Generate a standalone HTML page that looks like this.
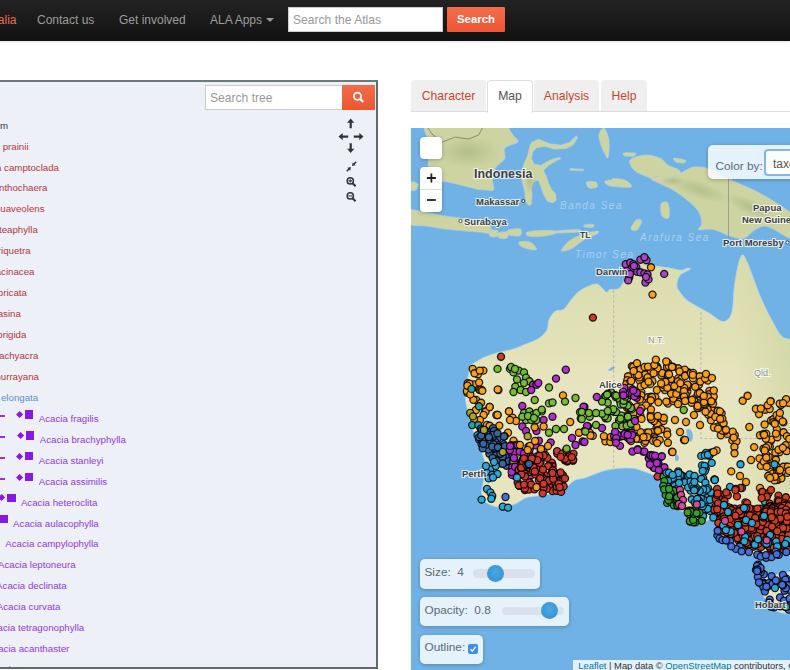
<!DOCTYPE html>
<html><head><meta charset="utf-8"><style>
*{box-sizing:border-box;margin:0;padding:0}
html,body{width:790px;height:670px;overflow:hidden;background:#fff;font-family:"Liberation Sans",sans-serif}
.abs{position:absolute}
#nav{left:0;top:0;width:790px;height:41px;background:linear-gradient(#232323,#111);box-shadow:0 1px 2px rgba(0,0,0,.12)}
.nl{position:absolute;top:13px;font-size:12px;color:#9d9d9d;white-space:nowrap;line-height:14px}
#sinp{left:288px;top:7px;width:155px;height:25px;background:#fff;border:1px solid #ccc}
#sinp span{position:absolute;left:4px;top:5px;font-size:12.1px;color:#999;line-height:14px}
#sbtn{left:447px;top:7px;width:58px;height:25px;background:linear-gradient(#f36c4c,#ee5631);border-radius:1px;color:#fff;font-weight:bold;font-size:11.4px;text-align:center;line-height:25px}
#tree{left:-10px;top:80px;width:388px;height:589px;background:#edf0f7;border:2px solid #5f6b6b;border-top-color:#6d7878}
.tr{position:absolute;font-size:9.7px;line-height:12px;white-space:nowrap}
.red{color:#b3363c}
.pur{color:#9038e6}
.blu{color:#5b8ee0}
#tsin{left:205px;top:85px;width:138px;height:25px;background:#fff;border:1px solid #ccc}
#tsin span{position:absolute;left:4px;top:5px;font-size:12.1px;color:#999;line-height:14px}
#tsbtn{left:342px;top:85px;width:33px;height:25px;background:linear-gradient(#f36c4c,#ee5631)}
.tab{position:absolute;top:80px;height:31px;background:#efefef;border-radius:4px 4px 0 0;font-size:12.2px;color:#c9462c;line-height:14px;padding-top:9px;text-align:center}
#tabline{left:411px;top:111px;width:379px;height:1px;background:#ddd}
#map{left:411px;top:128px;width:379px;height:542px;overflow:hidden;background:#72b0e3}
.lc{position:absolute;background:rgba(255,255,255,.82);border-radius:5px;box-shadow:0 1px 4px rgba(0,0,0,.25);font-size:12.5px;color:#555;line-height:14px}
</style></head><body>
<div id="nav" class="abs">
<div class="nl" style="right:773.5px;color:#ea6c4b">Australia</div>
<div class="nl" style="left:37px">Contact us</div>
<div class="nl" style="left:119px">Get involved</div>
<div class="nl" style="left:210px">ALA Apps</div>
<div class="abs" style="left:266px;top:18px;width:0;height:0;border-left:4px solid transparent;border-right:4px solid transparent;border-top:4px solid #9d9d9d"></div>
<div id="sinp" class="abs"><span>Search the Atlas</span></div>
<div id="sbtn" class="abs">Search</div>
</div>
<div id="tree" class="abs" style="background:#edf0f7;border:none;z-index:0"></div>
<div id="tsin" class="abs"><span>Search tree</span></div>
<div id="tsbtn" class="abs"><svg width="33" height="25" viewBox="0 0 33 25"><circle cx="15.5" cy="11.3" r="3.6" stroke="#fff" stroke-width="1.8" fill="none"/><path d="M18.2 14 l3 3" stroke="#fff" stroke-width="2.2"/></svg></div>
<div class="abs" style="left:0;top:0;width:376px;height:667px;overflow:hidden"><div class="tr " style="left:0px;top:119.6px;color:#333">m</div>
<div class="tr red" style="left:0px;top:140.5px">&nbsp;prainii</div>
<div class="tr red" style="left:-4px;top:161.5px">a&nbsp;camptoclada</div>
<div class="tr red" style="left:-1px;top:182.4px">nthochaera</div>
<div class="tr red" style="left:-4.5px;top:203.4px">suaveolens</div>
<div class="tr red" style="left:-1px;top:224.3px">teaphylla</div>
<div class="tr red" style="left:-2.2px;top:245.2px">riquetra</div>
<div class="tr red" style="left:-4.3px;top:266.2px">acinacea</div>
<div class="tr red" style="left:-2.2px;top:287.1px">bricata</div>
<div class="tr red" style="left:-2.3px;top:308.1px">asina</div>
<div class="tr red" style="left:-2.7px;top:329.0px">brigida</div>
<div class="tr red" style="left:-1px;top:349.9px">achyacra</div>
<div class="tr red" style="left:-7.3px;top:370.9px">murrayana</div>
<div class="tr blu" style="left:-7.1px;top:391.8px">a&nbsp;elongata</div>
<div class="tr pur" style="left:38.8px;top:412.8px">Acacia fragilis</div>
<div class="abs" style="left:0;top:415.2px;width:5px;height:1.5px;background:#9b2fe0"></div>
<div class="abs" style="left:16.7px;top:411.7px;width:5.2px;height:5.2px;background:#8818e8;transform:rotate(45deg)"></div>
<div class="abs" style="left:24.8px;top:410.1px;width:8.6px;height:8.6px;background:#8818e8"></div>
<div class="tr pur" style="left:39.7px;top:433.7px">Acacia brachyphylla</div>
<div class="abs" style="left:0;top:436.1px;width:5px;height:1.5px;background:#9b2fe0"></div>
<div class="abs" style="left:17.5px;top:432.6px;width:5.2px;height:5.2px;background:#8818e8;transform:rotate(45deg)"></div>
<div class="abs" style="left:25.8px;top:431.0px;width:8.6px;height:8.6px;background:#8818e8"></div>
<div class="tr pur" style="left:38.8px;top:454.6px">Acacia stanleyi</div>
<div class="abs" style="left:0;top:457.0px;width:5px;height:1.5px;background:#9b2fe0"></div>
<div class="abs" style="left:16.7px;top:453.5px;width:5.2px;height:5.2px;background:#8818e8;transform:rotate(45deg)"></div>
<div class="abs" style="left:24.8px;top:451.9px;width:8.6px;height:8.6px;background:#8818e8"></div>
<div class="tr pur" style="left:38.8px;top:475.6px">Acacia assimilis</div>
<div class="abs" style="left:0;top:478.0px;width:5px;height:1.5px;background:#9b2fe0"></div>
<div class="abs" style="left:16.7px;top:474.5px;width:5.2px;height:5.2px;background:#8818e8;transform:rotate(45deg)"></div>
<div class="abs" style="left:24.8px;top:472.9px;width:8.6px;height:8.6px;background:#8818e8"></div>
<div class="tr pur" style="left:20.9px;top:496.5px">Acacia heteroclita</div>
<div class="abs" style="left:-0.8px;top:495.4px;width:5.2px;height:5.2px;background:#8818e8;transform:rotate(45deg)"></div>
<div class="abs" style="left:7.4px;top:493.8px;width:8.6px;height:8.6px;background:#8818e8"></div>
<div class="tr pur" style="left:13.1px;top:517.5px">Acacia aulacophylla</div>
<div class="abs" style="left:-8.8px;top:516.4px;width:5.2px;height:5.2px;background:#8818e8;transform:rotate(45deg)"></div>
<div class="abs" style="left:-1.0px;top:514.8px;width:8.6px;height:8.6px;background:#8818e8"></div>
<div class="tr pur" style="left:5.3px;top:538.4px">Acacia campylophylla</div>
<div class="tr pur" style="left:-2px;top:559.3px">Acacia leptoneura</div>
<div class="tr pur" style="left:-3.9px;top:580.3px">Acacia declinata</div>
<div class="tr pur" style="left:-3.2px;top:601.2px">Acacia curvata</div>
<div class="tr pur" style="left:-13.8px;top:622.2px">Acacia tetragonophylla</div>
<div class="tr pur" style="left:-13.1px;top:643.1px">Acacia acanthaster</div>
<div class="tr pur" style="left:-13.1px;top:664.0px">Acacia aneura</div></div>
<svg class="abs" style="left:330px;top:112px" width="40" height="100" viewBox="330 112 40 100">
<g fill="#333" stroke="none">
<path d="M350.7 118.5 l-3.6 4.2 h2.5 v5.5 h2.2 v-5.5 h2.5z"/>
<path d="M350.7 153 l-3.6 -4.2 h2.5 v-5.5 h2.2 v5.5 h2.5z"/>
<path d="M338.5 136.6 l4.2 -3.6 v2.5 h5.5 v2.2 h-5.5 v2.5z"/>
<path d="M363.5 136.6 l-4.2 -3.6 v2.5 h-5.5 v2.2 h5.5 v2.5z"/>
</g>
<path d="M346.8 171.2 L349.2 168.8 M356.2 161.8 L353.7 164.3" stroke="#333" stroke-width="1.6" fill="none"/>
<path d="M350.9 167.1 L350.19 170.63 L347.37 167.81Z M352.0 166.0 L355.53 165.29 L352.71 162.47Z" fill="#333"/>
<g stroke="#333" fill="none">
<circle cx="350.3" cy="180.9" r="3.1" stroke-width="1.5"/>
<path d="M352.6 183.2 l3 3" stroke-width="2"/>
<path d="M348.6 180.9 h3.4 M350.3 179.2 v3.4" stroke-width="1.1"/>
<circle cx="350.3" cy="195.9" r="3.1" stroke-width="1.5"/>
<path d="M352.6 198.2 l3 3" stroke-width="2"/>
<path d="M348.6 195.9 h3.4" stroke-width="1.1"/>
</g>
</svg>
<div class="abs" style="left:-10px;top:80px;width:388px;height:589px;border:2px solid #5f6b6b;border-top-color:#6d7878"></div>
<div class="tab" style="left:411px;width:75px">Character</div>
<div class="tab" style="left:487px;width:46px;background:#fff;border:1px solid #ddd;border-bottom-color:#fff;color:#555;padding-top:8px;height:33px;z-index:2">Map</div>
<div class="tab" style="left:534px;width:65px">Analysis</div>
<div class="tab" style="left:601px;width:46px">Help</div>
<div id="tabline" class="abs"></div>
<div id="map" class="abs"><svg width="379" height="542" viewBox="411 128 379 542" style="display:block">
<rect x="411" y="128" width="379" height="542" fill="#71b2e6"/>
<g fill="#cdd4a2" stroke="#a9cde8" stroke-width="0.6">
<path d="M426.0,120.0 C440.3,118.7 496.2,118.7 510.0,120.0 C523.8,121.3 508.3,125.3 509.0,128.0 C509.7,130.7 512.5,133.7 514.0,136.0 C515.5,138.3 519.5,140.0 518.0,142.0 C516.5,144.0 507.2,145.3 505.0,148.0 C502.8,150.7 506.2,155.3 504.8,158.4 C503.4,161.5 498.6,164.0 496.7,166.5 C494.8,169.0 494.4,171.2 493.7,173.6 C493.0,176.0 492.6,178.0 492.6,180.7 C492.6,183.4 494.7,188.4 493.6,190.0 C492.5,191.6 488.6,190.1 486.0,190.0 C483.4,189.9 480.6,189.9 478.0,189.5 C475.4,189.1 473.3,188.2 470.4,187.5 C467.4,186.8 463.7,185.8 460.3,185.0 C456.9,184.2 453.4,183.2 450.0,182.5 C446.6,181.8 443.0,181.8 440.0,181.0 C437.0,180.2 434.0,180.7 432.0,178.0 C430.0,175.3 428.3,169.7 428.0,165.0 C427.7,160.3 430.0,154.2 430.0,150.0 C430.0,145.8 429.0,143.7 428.0,140.0 C427.0,136.3 424.3,131.3 424.0,128.0 C423.7,124.7 411.7,121.3 426.0,120.0Z"/>
<path d="M405.0,210.0 C408.3,208.0 418.3,211.0 425.0,212.0 C431.7,213.0 438.5,214.9 445.0,216.0 C451.5,217.1 458.5,217.5 464.0,218.5 C469.5,219.5 473.7,220.8 478.0,222.0 C482.3,223.2 488.0,224.2 490.0,226.0 C492.0,227.8 492.0,232.0 490.0,233.0 C488.0,234.0 482.3,232.3 478.0,232.0 C473.7,231.7 469.5,231.5 464.0,231.0 C458.5,230.5 451.5,229.8 445.0,229.0 C438.5,228.2 431.7,226.8 425.0,226.0 C418.3,225.2 408.3,226.7 405.0,224.0 C401.7,221.3 401.7,212.0 405.0,210.0Z"/>
<path d="M490.0,231.0 C491.3,230.1 496.4,229.5 497.6,230.4 C498.8,231.3 498.3,235.6 497.0,236.5 C495.7,237.4 491.2,236.9 490.0,236.0 C488.8,235.1 488.7,231.9 490.0,231.0Z"/>
<path d="M498.4,233.0 C499.8,232.0 506.1,231.2 507.5,232.0 C508.9,232.8 508.4,237.0 507.0,238.0 C505.6,239.0 500.4,238.8 499.0,238.0 C497.6,237.2 497.0,234.0 498.4,233.0Z"/>
<path d="M508.2,230.0 C510.1,229.0 518.4,228.1 520.4,229.0 C522.4,229.9 521.9,234.7 520.0,235.7 C518.1,236.7 511.0,235.9 509.0,235.0 C507.0,234.1 506.3,231.0 508.2,230.0Z"/>
<path d="M527.2,232.0 C529.2,231.1 535.3,230.6 540.0,230.4 C544.7,230.2 552.8,230.2 555.3,230.8 C557.8,231.4 557.5,233.1 555.0,234.0 C552.5,234.9 544.5,236.2 540.0,236.5 C535.5,236.8 530.1,236.8 528.0,236.0 C525.9,235.2 525.2,232.9 527.2,232.0Z"/>
<path d="M556.0,231.0 C559.7,230.4 574.3,229.4 578.0,229.6 C581.7,229.8 581.7,231.4 578.0,232.0 C574.3,232.6 559.7,233.2 556.0,233.0 C552.3,232.8 552.3,231.6 556.0,231.0Z"/>
<path d="M561.4,250.1 C562.2,248.4 565.7,243.5 569.0,241.0 C572.3,238.5 576.6,236.6 581.1,234.9 C585.6,233.2 593.5,231.3 596.3,231.1 C599.1,230.8 599.4,232.2 597.9,233.4 C596.4,234.6 590.5,236.2 587.2,238.0 C583.9,239.8 580.6,242.3 578.1,244.1 C575.6,245.9 574.3,247.5 572.0,248.6 C569.7,249.7 566.2,250.7 564.4,250.9 C562.6,251.2 560.6,251.8 561.4,250.1Z"/>
<path d="M519.0,242.0 C520.3,241.2 527.1,241.0 530.0,242.0 C532.9,243.0 535.6,246.7 536.3,248.0 C537.0,249.3 536.4,250.2 534.0,250.0 C531.6,249.8 524.5,248.3 522.0,247.0 C519.5,245.7 517.7,242.8 519.0,242.0Z"/>
<path d="M584.2,225.0 C585.6,224.6 591.8,223.9 593.3,224.3 C594.8,224.7 594.4,226.9 593.0,227.3 C591.6,227.8 586.5,227.4 585.0,227.0 C583.5,226.6 582.8,225.4 584.2,225.0Z"/>
<path d="M605.0,181.0 C606.7,180.0 615.7,179.3 620.0,180.0 C624.3,180.7 629.8,183.8 631.0,185.0 C632.2,186.2 630.5,186.8 627.0,187.0 C623.5,187.2 613.7,187.0 610.0,186.0 C606.3,185.0 603.3,182.0 605.0,181.0Z"/>
<path d="M587.0,182.0 C588.2,181.0 594.3,181.2 596.0,182.0 C597.7,182.8 598.2,186.0 597.0,187.0 C595.8,188.0 590.7,188.8 589.0,188.0 C587.3,187.2 585.8,183.0 587.0,182.0Z"/>
<path d="M599.0,134.0 C599.7,131.7 602.3,127.0 604.0,128.0 C605.7,129.0 608.3,135.0 609.0,140.0 C609.7,145.0 609.0,156.3 608.0,158.0 C607.0,159.7 604.3,152.7 603.0,150.0 C601.7,147.3 600.7,144.7 600.0,142.0 C599.3,139.3 598.3,136.3 599.0,134.0Z"/>
<path d="M630.0,160.0 C631.8,157.5 640.0,155.3 645.0,155.0 C650.0,154.7 656.2,156.3 660.0,158.0 C663.8,159.7 664.7,162.8 668.0,165.0 C671.3,167.2 678.3,168.5 680.0,171.0 C681.7,173.5 681.0,178.3 678.0,180.0 C675.0,181.7 667.5,181.7 662.0,181.0 C656.5,180.3 649.7,177.8 645.0,176.0 C640.3,174.2 636.5,172.7 634.0,170.0 C631.5,167.3 628.2,162.5 630.0,160.0Z"/>
<path d="M411.0,182.0 C412.2,181.0 417.2,182.7 418.0,184.0 C418.8,185.3 417.2,189.0 416.0,190.0 C414.8,191.0 411.8,191.3 411.0,190.0 C410.2,188.7 409.8,183.0 411.0,182.0Z"/>
<path d="M661.0,204.0 C662.0,201.8 666.7,200.8 668.0,203.0 C669.3,205.2 670.0,215.3 669.0,217.5 C668.0,219.7 663.3,218.2 662.0,216.0 C660.7,213.8 660.0,206.2 661.0,204.0Z"/>
<path d="M631.0,229.0 C630.8,227.3 634.2,221.3 636.0,220.0 C637.8,218.7 641.6,219.3 641.8,221.0 C642.0,222.7 638.8,228.7 637.0,230.0 C635.2,231.3 631.2,230.7 631.0,229.0Z"/>
<path d="M674.0,158.0 C675.5,157.7 683.3,159.2 685.0,160.0 C686.7,160.8 685.5,162.7 684.0,163.0 C682.5,163.3 677.7,162.8 676.0,162.0 C674.3,161.2 672.5,158.3 674.0,158.0Z"/>
<path d="M623.7,153.0 C625.4,152.5 633.3,152.5 635.0,153.0 C636.7,153.5 635.7,155.5 634.0,156.0 C632.3,156.5 626.7,156.5 625.0,156.0 C623.3,155.5 622.0,153.5 623.7,153.0Z"/>
<path d="M612.0,179.0 C613.2,178.0 621.7,178.7 625.0,180.0 C628.3,181.3 632.8,186.0 631.6,187.0 C630.4,188.0 621.3,187.3 618.0,186.0 C614.7,184.7 610.8,180.0 612.0,179.0Z"/>
<polygon points="530.1,145.1 527.4,155.9 523.4,165.3 520.7,176.0 522.8,184.1 524.8,192.1 525.4,201.5 528.8,205.5 531.5,204.2 532.1,194.8 531.5,188.1 534.2,181.4 538.2,180.0 540.9,186.7 543.6,194.8 547.6,201.5 553.0,202.9 556.3,200.2 555.6,193.5 551.6,189.4 548.9,184.1 546.2,176.0 543.6,170.6 548.9,165.3 555.6,161.2 561.0,158.6 559.7,157.2 554.3,158.6 547.6,161.2 540.9,165.3 534.2,163.9 531.5,158.6 532.8,151.8 536.8,147.8 544.9,146.5 554.3,149.2 566.4,148.5 573.1,145.1 577.8,137.8 576.4,135.7 569.1,142.4 561.0,145.1 550.3,143.8 538.2,139.1 531.5,142.4" stroke-linejoin="round"/>
<path d="M570,168.5 l14,0.8 l-1,1.5 l-13,-0.5z M586.5,182 l3,0 l1,4 l-3,0.5z"/>
<path d="M650.8,178.8 C649.2,176.6 658.0,176.5 662.0,176.0 C666.0,175.5 670.0,177.2 674.7,175.9 C679.4,174.6 686.0,169.5 690.0,168.0 C694.0,166.5 695.7,166.8 698.6,166.9 C701.5,167.0 702.6,166.4 707.6,168.4 C712.6,170.4 720.5,175.1 728.5,178.8 C736.5,182.5 747.4,186.8 755.4,190.8 C763.4,194.8 770.5,199.2 776.3,202.7 C782.1,206.2 786.0,209.8 790.0,211.7 C794.0,213.6 798.3,209.3 800.0,214.0 C801.7,218.7 801.7,235.9 800.0,240.0 C798.3,244.1 795.5,240.8 790.0,238.6 C784.5,236.4 773.1,228.1 767.3,226.6 C761.5,225.1 759.4,227.6 755.4,229.6 C751.4,231.6 747.9,237.6 743.4,238.6 C738.9,239.6 733.5,237.1 728.5,235.6 C723.5,234.1 718.5,230.6 713.5,229.6 C708.5,228.6 700.6,230.6 698.6,229.6 C696.6,228.6 701.6,226.7 701.6,223.7 C701.6,220.7 701.1,215.7 698.6,211.7 C696.1,207.7 691.1,203.5 686.6,199.8 C682.1,196.1 677.7,192.8 671.7,189.3 C665.7,185.8 652.4,181.0 650.8,178.8Z" fill="#cdd4a2"/>
</g>
<defs><linearGradient id="gN" x1="0" y1="0" x2="0" y2="1" gradientUnits="objectBoundingBox"><stop offset="0" stop-color="#c9d39c" stop-opacity="0.5"/><stop offset="0.32" stop-color="#d3d9a6" stop-opacity="0.25"/><stop offset="0.45" stop-color="#e7e5bf" stop-opacity="0"/></linearGradient><linearGradient id="gE" x1="0" y1="0" x2="1" y2="0"><stop offset="0.8" stop-color="#c9d39c" stop-opacity="0"/><stop offset="1" stop-color="#c5cf98" stop-opacity="0.6"/></linearGradient><radialGradient id="gM" cx="0.5" cy="0.5" r="0.5"><stop offset="0" stop-color="#9fae78" stop-opacity="0.55"/><stop offset="1" stop-color="#9fae78" stop-opacity="0"/></radialGradient></defs>
<path d="M595.0,284.0 C591.6,284.6 584.2,287.9 580.4,290.4 C576.6,292.9 574.8,295.6 572.0,298.8 C569.2,302.0 566.5,307.2 563.7,309.3 C560.9,311.4 557.8,309.6 555.3,311.3 C552.8,313.0 550.4,316.6 549.0,319.7 C547.6,322.8 548.7,326.9 547.0,330.0 C545.3,333.1 542.4,336.0 538.6,338.5 C534.8,341.0 528.2,343.1 524.0,344.8 C519.8,346.6 518.0,347.6 513.5,349.0 C509.0,350.4 501.7,351.6 496.8,353.0 C491.9,354.4 487.8,355.8 484.3,357.3 C480.8,358.8 478.2,360.6 476.0,362.0 C473.8,363.4 472.1,363.5 470.9,365.4 C469.7,367.3 469.6,370.5 468.9,373.4 C468.2,376.3 467.4,379.9 466.8,382.8 C466.2,385.7 465.7,388.2 465.5,390.9 C465.3,393.6 465.3,396.3 465.5,399.0 C465.7,401.7 466.2,404.1 466.8,407.0 C467.4,409.9 468.2,413.5 468.9,416.4 C469.6,419.3 469.9,421.3 470.9,424.4 C471.9,427.5 473.6,431.6 474.9,435.2 C476.2,438.8 477.3,442.0 478.9,446.0 C480.4,450.0 483.3,455.1 484.2,459.0 C485.1,462.9 484.3,465.7 484.2,469.5 C484.1,473.3 483.8,478.2 483.4,482.0 C483.0,485.8 481.3,489.3 481.6,492.5 C481.9,495.7 482.6,499.0 485.0,501.4 C487.4,503.8 492.2,505.8 495.8,506.7 C499.4,507.6 502.9,507.3 506.4,506.7 C509.9,506.1 513.7,504.5 517.0,503.0 C520.3,501.5 522.8,499.0 526.0,497.8 C529.2,496.6 532.7,496.6 536.5,496.0 C540.3,495.4 544.9,494.9 549.0,494.3 C553.1,493.7 558.1,494.0 561.3,492.5 C564.5,491.0 566.0,487.5 568.4,485.4 C570.8,483.3 572.6,481.3 575.5,480.0 C578.4,478.7 580.8,479.2 586.0,477.5 C591.2,475.8 599.7,471.6 607.0,470.0 C614.3,468.4 623.8,467.8 630.0,468.0 C636.2,468.2 639.9,470.1 644.3,471.5 C648.7,472.9 653.5,475.1 656.3,476.3 C659.1,477.5 659.7,477.1 661.3,478.8 C662.9,480.5 664.3,483.3 665.8,486.3 C667.3,489.3 668.8,493.5 670.3,496.7 C671.8,499.9 672.8,503.2 674.8,505.7 C676.8,508.2 679.7,509.6 682.2,511.6 C684.7,513.6 686.7,515.6 689.7,517.6 C692.7,519.6 696.6,523.4 700.1,523.6 C703.6,523.9 708.1,519.1 710.6,519.1 C713.1,519.1 713.5,521.4 715.0,523.6 C716.5,525.8 718.6,530.3 719.6,532.5 C720.6,534.7 718.8,534.8 721.0,537.0 C723.2,539.2 728.8,542.8 732.7,545.5 C736.6,548.2 740.2,551.2 744.6,553.0 C749.0,554.8 754.2,555.6 759.0,556.0 C763.8,556.4 768.1,556.0 773.3,555.5 C778.5,555.0 785.5,553.4 790.0,553.0 C794.5,552.6 798.3,589.2 800.0,553.0 C801.7,516.8 801.7,371.7 800.0,336.0 C798.3,300.3 793.1,339.0 790.0,339.0 C786.9,339.0 784.2,338.9 781.3,336.0 C778.4,333.1 775.9,327.8 772.5,321.5 C769.1,315.2 765.3,308.2 760.9,298.0 C756.5,287.8 749.7,267.1 746.3,260.4 C742.9,253.6 742.4,253.6 740.5,257.5 C738.6,261.4 736.2,274.5 734.7,283.7 C733.2,292.9 733.8,306.5 731.8,312.8 C729.8,319.1 726.9,321.5 723.0,321.5 C719.1,321.5 714.3,316.2 708.5,312.8 C702.7,309.4 692.8,304.5 688.0,301.0 C683.2,297.5 681.8,294.6 679.9,292.0 C678.0,289.4 676.8,288.3 676.8,285.5 C676.8,282.7 677.7,278.1 679.9,275.4 C682.1,272.7 688.8,270.5 690.0,269.3 C691.2,268.1 688.5,268.1 687.0,268.3 C685.5,268.5 683.7,270.3 681.0,270.3 C678.3,270.3 674.7,269.0 670.8,268.3 C666.9,267.6 661.3,267.0 657.6,266.3 C653.9,265.6 651.2,265.7 648.5,264.2 C645.8,262.7 644.0,256.6 641.5,257.5 C639.0,258.4 636.0,265.7 633.3,269.3 C630.6,272.9 627.6,276.2 625.2,279.4 C622.8,282.6 621.5,286.8 619.0,288.5 C616.5,290.2 612.1,289.0 610.0,289.6 C607.9,290.2 608.1,292.8 606.6,292.4 C605.1,292.0 602.9,288.4 601.0,287.0 C599.1,285.6 598.4,283.4 595.0,284.0Z" fill="#e7e5bf" stroke="#b5d6ee" stroke-width="0.8"/>
<path d="M595.0,284.0 C591.6,284.6 584.2,287.9 580.4,290.4 C576.6,292.9 574.8,295.6 572.0,298.8 C569.2,302.0 566.5,307.2 563.7,309.3 C560.9,311.4 557.8,309.6 555.3,311.3 C552.8,313.0 550.4,316.6 549.0,319.7 C547.6,322.8 548.7,326.9 547.0,330.0 C545.3,333.1 542.4,336.0 538.6,338.5 C534.8,341.0 528.2,343.1 524.0,344.8 C519.8,346.6 518.0,347.6 513.5,349.0 C509.0,350.4 501.7,351.6 496.8,353.0 C491.9,354.4 487.8,355.8 484.3,357.3 C480.8,358.8 478.2,360.6 476.0,362.0 C473.8,363.4 472.1,363.5 470.9,365.4 C469.7,367.3 469.6,370.5 468.9,373.4 C468.2,376.3 467.4,379.9 466.8,382.8 C466.2,385.7 465.7,388.2 465.5,390.9 C465.3,393.6 465.3,396.3 465.5,399.0 C465.7,401.7 466.2,404.1 466.8,407.0 C467.4,409.9 468.2,413.5 468.9,416.4 C469.6,419.3 469.9,421.3 470.9,424.4 C471.9,427.5 473.6,431.6 474.9,435.2 C476.2,438.8 477.3,442.0 478.9,446.0 C480.4,450.0 483.3,455.1 484.2,459.0 C485.1,462.9 484.3,465.7 484.2,469.5 C484.1,473.3 483.8,478.2 483.4,482.0 C483.0,485.8 481.3,489.3 481.6,492.5 C481.9,495.7 482.6,499.0 485.0,501.4 C487.4,503.8 492.2,505.8 495.8,506.7 C499.4,507.6 502.9,507.3 506.4,506.7 C509.9,506.1 513.7,504.5 517.0,503.0 C520.3,501.5 522.8,499.0 526.0,497.8 C529.2,496.6 532.7,496.6 536.5,496.0 C540.3,495.4 544.9,494.9 549.0,494.3 C553.1,493.7 558.1,494.0 561.3,492.5 C564.5,491.0 566.0,487.5 568.4,485.4 C570.8,483.3 572.6,481.3 575.5,480.0 C578.4,478.7 580.8,479.2 586.0,477.5 C591.2,475.8 599.7,471.6 607.0,470.0 C614.3,468.4 623.8,467.8 630.0,468.0 C636.2,468.2 639.9,470.1 644.3,471.5 C648.7,472.9 653.5,475.1 656.3,476.3 C659.1,477.5 659.7,477.1 661.3,478.8 C662.9,480.5 664.3,483.3 665.8,486.3 C667.3,489.3 668.8,493.5 670.3,496.7 C671.8,499.9 672.8,503.2 674.8,505.7 C676.8,508.2 679.7,509.6 682.2,511.6 C684.7,513.6 686.7,515.6 689.7,517.6 C692.7,519.6 696.6,523.4 700.1,523.6 C703.6,523.9 708.1,519.1 710.6,519.1 C713.1,519.1 713.5,521.4 715.0,523.6 C716.5,525.8 718.6,530.3 719.6,532.5 C720.6,534.7 718.8,534.8 721.0,537.0 C723.2,539.2 728.8,542.8 732.7,545.5 C736.6,548.2 740.2,551.2 744.6,553.0 C749.0,554.8 754.2,555.6 759.0,556.0 C763.8,556.4 768.1,556.0 773.3,555.5 C778.5,555.0 785.5,553.4 790.0,553.0 C794.5,552.6 798.3,589.2 800.0,553.0 C801.7,516.8 801.7,371.7 800.0,336.0 C798.3,300.3 793.1,339.0 790.0,339.0 C786.9,339.0 784.2,338.9 781.3,336.0 C778.4,333.1 775.9,327.8 772.5,321.5 C769.1,315.2 765.3,308.2 760.9,298.0 C756.5,287.8 749.7,267.1 746.3,260.4 C742.9,253.6 742.4,253.6 740.5,257.5 C738.6,261.4 736.2,274.5 734.7,283.7 C733.2,292.9 733.8,306.5 731.8,312.8 C729.8,319.1 726.9,321.5 723.0,321.5 C719.1,321.5 714.3,316.2 708.5,312.8 C702.7,309.4 692.8,304.5 688.0,301.0 C683.2,297.5 681.8,294.6 679.9,292.0 C678.0,289.4 676.8,288.3 676.8,285.5 C676.8,282.7 677.7,278.1 679.9,275.4 C682.1,272.7 688.8,270.5 690.0,269.3 C691.2,268.1 688.5,268.1 687.0,268.3 C685.5,268.5 683.7,270.3 681.0,270.3 C678.3,270.3 674.7,269.0 670.8,268.3 C666.9,267.6 661.3,267.0 657.6,266.3 C653.9,265.6 651.2,265.7 648.5,264.2 C645.8,262.7 644.0,256.6 641.5,257.5 C639.0,258.4 636.0,265.7 633.3,269.3 C630.6,272.9 627.6,276.2 625.2,279.4 C622.8,282.6 621.5,286.8 619.0,288.5 C616.5,290.2 612.1,289.0 610.0,289.6 C607.9,290.2 608.1,292.8 606.6,292.4 C605.1,292.0 602.9,288.4 601.0,287.0 C599.1,285.6 598.4,283.4 595.0,284.0Z" fill="url(#gN)"/>
<path d="M595.0,284.0 C591.6,284.6 584.2,287.9 580.4,290.4 C576.6,292.9 574.8,295.6 572.0,298.8 C569.2,302.0 566.5,307.2 563.7,309.3 C560.9,311.4 557.8,309.6 555.3,311.3 C552.8,313.0 550.4,316.6 549.0,319.7 C547.6,322.8 548.7,326.9 547.0,330.0 C545.3,333.1 542.4,336.0 538.6,338.5 C534.8,341.0 528.2,343.1 524.0,344.8 C519.8,346.6 518.0,347.6 513.5,349.0 C509.0,350.4 501.7,351.6 496.8,353.0 C491.9,354.4 487.8,355.8 484.3,357.3 C480.8,358.8 478.2,360.6 476.0,362.0 C473.8,363.4 472.1,363.5 470.9,365.4 C469.7,367.3 469.6,370.5 468.9,373.4 C468.2,376.3 467.4,379.9 466.8,382.8 C466.2,385.7 465.7,388.2 465.5,390.9 C465.3,393.6 465.3,396.3 465.5,399.0 C465.7,401.7 466.2,404.1 466.8,407.0 C467.4,409.9 468.2,413.5 468.9,416.4 C469.6,419.3 469.9,421.3 470.9,424.4 C471.9,427.5 473.6,431.6 474.9,435.2 C476.2,438.8 477.3,442.0 478.9,446.0 C480.4,450.0 483.3,455.1 484.2,459.0 C485.1,462.9 484.3,465.7 484.2,469.5 C484.1,473.3 483.8,478.2 483.4,482.0 C483.0,485.8 481.3,489.3 481.6,492.5 C481.9,495.7 482.6,499.0 485.0,501.4 C487.4,503.8 492.2,505.8 495.8,506.7 C499.4,507.6 502.9,507.3 506.4,506.7 C509.9,506.1 513.7,504.5 517.0,503.0 C520.3,501.5 522.8,499.0 526.0,497.8 C529.2,496.6 532.7,496.6 536.5,496.0 C540.3,495.4 544.9,494.9 549.0,494.3 C553.1,493.7 558.1,494.0 561.3,492.5 C564.5,491.0 566.0,487.5 568.4,485.4 C570.8,483.3 572.6,481.3 575.5,480.0 C578.4,478.7 580.8,479.2 586.0,477.5 C591.2,475.8 599.7,471.6 607.0,470.0 C614.3,468.4 623.8,467.8 630.0,468.0 C636.2,468.2 639.9,470.1 644.3,471.5 C648.7,472.9 653.5,475.1 656.3,476.3 C659.1,477.5 659.7,477.1 661.3,478.8 C662.9,480.5 664.3,483.3 665.8,486.3 C667.3,489.3 668.8,493.5 670.3,496.7 C671.8,499.9 672.8,503.2 674.8,505.7 C676.8,508.2 679.7,509.6 682.2,511.6 C684.7,513.6 686.7,515.6 689.7,517.6 C692.7,519.6 696.6,523.4 700.1,523.6 C703.6,523.9 708.1,519.1 710.6,519.1 C713.1,519.1 713.5,521.4 715.0,523.6 C716.5,525.8 718.6,530.3 719.6,532.5 C720.6,534.7 718.8,534.8 721.0,537.0 C723.2,539.2 728.8,542.8 732.7,545.5 C736.6,548.2 740.2,551.2 744.6,553.0 C749.0,554.8 754.2,555.6 759.0,556.0 C763.8,556.4 768.1,556.0 773.3,555.5 C778.5,555.0 785.5,553.4 790.0,553.0 C794.5,552.6 798.3,589.2 800.0,553.0 C801.7,516.8 801.7,371.7 800.0,336.0 C798.3,300.3 793.1,339.0 790.0,339.0 C786.9,339.0 784.2,338.9 781.3,336.0 C778.4,333.1 775.9,327.8 772.5,321.5 C769.1,315.2 765.3,308.2 760.9,298.0 C756.5,287.8 749.7,267.1 746.3,260.4 C742.9,253.6 742.4,253.6 740.5,257.5 C738.6,261.4 736.2,274.5 734.7,283.7 C733.2,292.9 733.8,306.5 731.8,312.8 C729.8,319.1 726.9,321.5 723.0,321.5 C719.1,321.5 714.3,316.2 708.5,312.8 C702.7,309.4 692.8,304.5 688.0,301.0 C683.2,297.5 681.8,294.6 679.9,292.0 C678.0,289.4 676.8,288.3 676.8,285.5 C676.8,282.7 677.7,278.1 679.9,275.4 C682.1,272.7 688.8,270.5 690.0,269.3 C691.2,268.1 688.5,268.1 687.0,268.3 C685.5,268.5 683.7,270.3 681.0,270.3 C678.3,270.3 674.7,269.0 670.8,268.3 C666.9,267.6 661.3,267.0 657.6,266.3 C653.9,265.6 651.2,265.7 648.5,264.2 C645.8,262.7 644.0,256.6 641.5,257.5 C639.0,258.4 636.0,265.7 633.3,269.3 C630.6,272.9 627.6,276.2 625.2,279.4 C622.8,282.6 621.5,286.8 619.0,288.5 C616.5,290.2 612.1,289.0 610.0,289.6 C607.9,290.2 608.1,292.8 606.6,292.4 C605.1,292.0 602.9,288.4 601.0,287.0 C599.1,285.6 598.4,283.4 595.0,284.0Z" fill="url(#gE)"/>
<g fill="url(#gM)"><ellipse cx="700" cy="190" rx="30" ry="9" transform="rotate(18 700 190)"/><ellipse cx="750" cy="207" rx="28" ry="8" transform="rotate(25 750 207)"/><ellipse cx="672" cy="181" rx="12" ry="5"/><ellipse cx="468" cy="152" rx="32" ry="16"/><ellipse cx="530" cy="180" rx="6" ry="14"/></g>
<path d="M758.0,572.0 C759.0,569.3 764.3,575.7 768.0,576.0 C771.7,576.3 776.3,574.7 780.0,574.0 C783.7,573.3 786.7,572.3 790.0,572.0 C793.3,571.7 798.3,564.7 800.0,572.0 C801.7,579.3 801.7,609.0 800.0,616.0 C798.3,623.0 793.5,614.7 790.0,614.0 C786.5,613.3 782.3,613.3 779.0,612.0 C775.7,610.7 772.8,609.3 770.0,606.0 C767.2,602.7 764.0,597.7 762.0,592.0 C760.0,586.3 757.0,574.7 758.0,572.0Z" fill="#e7e5bf" stroke="#b5d6ee" stroke-width="0.8"/>
<g fill="#7ab6e6"><path d="M608,371 q3,-5 7,-4 q-1,4 -7,4z"/><path d="M686,430 q4,-3 6,2 q2,6 -1,10 q-4,-2 -5,-12z"/><path d="M675,455 q3,-2 4,3 q-1,5 -4,2z"/></g>
<g stroke="#aaa" stroke-width="0.7" stroke-dasharray="3,2" fill="none"><path d="M613.7,290 V470"/><path d="M700.9,312 V438.5 H790"/></g>
<path d="M728.5,177 V238" stroke="#888" stroke-width="0.7" fill="none"/>
<path d="M428,128 L432,134 L442,142.2 L455.2,137.1 L468.4,139.1 L478.5,135.1 L482.5,128" stroke="#777" stroke-width="0.8" fill="none"/>
<g stroke="#000" stroke-width="1.3" stroke-opacity="0.85">
<circle cx="625.7" cy="264.2" r="3.55" fill="#a845c4"/>
<circle cx="630.3" cy="262.7" r="3.55" fill="#a845c4"/>
<circle cx="633.3" cy="264.2" r="3.55" fill="#a845c4"/>
<circle cx="636.3" cy="267.3" r="3.55" fill="#a845c4"/>
<circle cx="631.3" cy="269.3" r="3.55" fill="#a845c4"/>
<circle cx="637.3" cy="271.8" r="3.55" fill="#a845c4"/>
<circle cx="640.4" cy="272.3" r="3.55" fill="#a845c4"/>
<circle cx="644.4" cy="273.4" r="3.55" fill="#a845c4"/>
<circle cx="647.5" cy="274.4" r="3.55" fill="#a845c4"/>
<circle cx="629.2" cy="277.4" r="3.55" fill="#a845c4"/>
<circle cx="628.2" cy="280.4" r="3.55" fill="#a845c4"/>
<circle cx="645.4" cy="282.5" r="3.55" fill="#a845c4"/>
<circle cx="648.5" cy="279.4" r="3.55" fill="#a845c4"/>
<circle cx="640.4" cy="259.7" r="3.55" fill="#a845c4"/>
<circle cx="646.5" cy="260.2" r="3.55" fill="#a845c4"/>
<circle cx="644.4" cy="257.2" r="3.55" fill="#a845c4"/>
<circle cx="627.0" cy="271.0" r="3.55" fill="#a845c4"/>
<circle cx="630.0" cy="274.0" r="3.55" fill="#a845c4"/>
<circle cx="646.0" cy="277.0" r="3.55" fill="#a845c4"/>
<circle cx="634.0" cy="266.0" r="3.55" fill="#a845c4"/>
<circle cx="664.2" cy="273.9" r="3.55" fill="#a845c4"/>
<circle cx="651.0" cy="267.3" r="3.55" fill="#f9a013"/>
<circle cx="652.5" cy="294.6" r="3.55" fill="#f9a013"/>
<circle cx="592.9" cy="317.6" r="3.55" fill="#cc3a2a"/>
<circle cx="501.0" cy="356.7" r="3.55" fill="#cc3a2a"/>
<circle cx="472.7" cy="368.9" r="3.55" fill="#f9a013"/>
<circle cx="478.0" cy="374.2" r="3.55" fill="#f9a013"/>
<circle cx="483.4" cy="370.6" r="3.55" fill="#f9a013"/>
<circle cx="474.5" cy="373.3" r="3.55" fill="#f9a013"/>
<circle cx="479.8" cy="370.6" r="3.55" fill="#f9a013"/>
<circle cx="497.5" cy="368.9" r="3.55" fill="#76bd34"/>
<circle cx="510.0" cy="368.9" r="3.55" fill="#76bd34"/>
<circle cx="513.5" cy="372.4" r="3.55" fill="#76bd34"/>
<circle cx="518.8" cy="370.6" r="3.55" fill="#76bd34"/>
<circle cx="524.0" cy="372.4" r="3.55" fill="#76bd34"/>
<circle cx="526.0" cy="377.7" r="3.55" fill="#76bd34"/>
<circle cx="529.4" cy="381.3" r="3.55" fill="#76bd34"/>
<circle cx="517.0" cy="379.5" r="3.55" fill="#76bd34"/>
<circle cx="515.3" cy="386.6" r="3.55" fill="#76bd34"/>
<circle cx="513.5" cy="392.0" r="3.55" fill="#76bd34"/>
<circle cx="520.6" cy="390.0" r="3.55" fill="#76bd34"/>
<circle cx="526.0" cy="392.0" r="3.55" fill="#76bd34"/>
<circle cx="524.0" cy="383.0" r="3.55" fill="#76bd34"/>
<circle cx="511.0" cy="367.0" r="3.55" fill="#76bd34"/>
<circle cx="515.0" cy="369.0" r="3.55" fill="#76bd34"/>
<circle cx="533.0" cy="384.8" r="3.55" fill="#b02ecc"/>
<circle cx="536.5" cy="384.8" r="3.55" fill="#b02ecc"/>
<circle cx="531.2" cy="390.0" r="3.55" fill="#b02ecc"/>
<circle cx="538.3" cy="383.0" r="3.55" fill="#b02ecc"/>
<circle cx="565.8" cy="369.7" r="3.55" fill="#b02ecc"/>
<circle cx="556.0" cy="378.6" r="3.55" fill="#b02ecc"/>
<circle cx="549.0" cy="387.5" r="3.55" fill="#76bd34"/>
<circle cx="473.8" cy="384.5" r="3.55" fill="#f9a013"/>
<circle cx="478.9" cy="389.4" r="3.55" fill="#f9a013"/>
<circle cx="467.4" cy="392.7" r="3.55" fill="#f9a013"/>
<circle cx="466.9" cy="391.0" r="3.55" fill="#f9a013"/>
<circle cx="467.7" cy="383.1" r="3.55" fill="#f9a013"/>
<circle cx="476.2" cy="400.0" r="3.55" fill="#f9a013"/>
<circle cx="469.0" cy="386.1" r="3.55" fill="#f9a013"/>
<circle cx="481.1" cy="402.8" r="3.55" fill="#f9a013"/>
<circle cx="479.9" cy="390.1" r="3.55" fill="#f9a013"/>
<circle cx="469.5" cy="383.7" r="3.55" fill="#f9a013"/>
<circle cx="473.4" cy="399.8" r="3.55" fill="#f9a013"/>
<circle cx="470.3" cy="394.4" r="3.55" fill="#f9a013"/>
<circle cx="481.3" cy="389.6" r="3.55" fill="#f9a013"/>
<circle cx="479.1" cy="382.4" r="3.55" fill="#f9a013"/>
<circle cx="467.4" cy="385.7" r="3.55" fill="#f9a013"/>
<circle cx="482.3" cy="390.8" r="3.55" fill="#f9a013"/>
<circle cx="471.5" cy="388.9" r="3.55" fill="#26a69e"/>
<circle cx="498.4" cy="390.0" r="3.55" fill="#f9a013"/>
<circle cx="497.7" cy="389.5" r="3.55" fill="#f9a013"/>
<circle cx="563.0" cy="395.4" r="3.55" fill="#f9a013"/>
<circle cx="565.0" cy="401.6" r="3.55" fill="#76bd34"/>
<circle cx="575.5" cy="398.0" r="3.55" fill="#76bd34"/>
<circle cx="534.7" cy="400.0" r="3.55" fill="#76bd34"/>
<circle cx="549.0" cy="403.4" r="3.55" fill="#76bd34"/>
<circle cx="552.5" cy="402.5" r="3.55" fill="#76bd34"/>
<circle cx="541.8" cy="411.4" r="3.55" fill="#76bd34"/>
<circle cx="522.3" cy="406.0" r="3.55" fill="#b02ecc"/>
<circle cx="489.6" cy="407.0" r="3.55" fill="#f9a013"/>
<circle cx="485.0" cy="411.4" r="3.55" fill="#f9a013"/>
<circle cx="497.5" cy="415.0" r="3.55" fill="#f9a013"/>
<circle cx="509.0" cy="411.4" r="3.55" fill="#f9a013"/>
<circle cx="512.6" cy="417.6" r="3.55" fill="#f9a013"/>
<circle cx="516.0" cy="421.0" r="3.55" fill="#f9a013"/>
<circle cx="510.0" cy="420.0" r="3.55" fill="#f9a013"/>
<circle cx="524.0" cy="413.0" r="3.55" fill="#76bd34"/>
<circle cx="529.4" cy="411.4" r="3.55" fill="#76bd34"/>
<circle cx="533.0" cy="415.0" r="3.55" fill="#76bd34"/>
<circle cx="526.0" cy="420.0" r="3.55" fill="#76bd34"/>
<circle cx="531.2" cy="420.0" r="3.55" fill="#76bd34"/>
<circle cx="536.5" cy="420.0" r="3.55" fill="#76bd34"/>
<circle cx="522.3" cy="416.7" r="3.55" fill="#76bd34"/>
<circle cx="536.5" cy="413.0" r="3.55" fill="#76bd34"/>
<circle cx="541.8" cy="409.6" r="3.55" fill="#76bd34"/>
<circle cx="528.0" cy="416.0" r="3.55" fill="#76bd34"/>
<circle cx="534.0" cy="418.0" r="3.55" fill="#76bd34"/>
<circle cx="552.5" cy="416.7" r="3.55" fill="#b02ecc"/>
<circle cx="543.6" cy="420.0" r="3.55" fill="#b02ecc"/>
<circle cx="536.5" cy="431.0" r="3.55" fill="#b02ecc"/>
<circle cx="522.3" cy="426.5" r="3.55" fill="#b02ecc"/>
<circle cx="526.0" cy="431.0" r="3.55" fill="#b02ecc"/>
<circle cx="543.6" cy="426.5" r="3.55" fill="#f9a013"/>
<circle cx="534.7" cy="427.3" r="3.55" fill="#f9a013"/>
<circle cx="570.2" cy="422.0" r="3.55" fill="#f9a013"/>
<circle cx="556.0" cy="429.0" r="3.55" fill="#76bd34"/>
<circle cx="564.0" cy="429.0" r="3.55" fill="#76bd34"/>
<circle cx="549.0" cy="432.7" r="3.55" fill="#76bd34"/>
<circle cx="580.0" cy="412.3" r="3.55" fill="#76bd34"/>
<circle cx="580.8" cy="418.5" r="3.55" fill="#76bd34"/>
<circle cx="589.7" cy="416.7" r="3.55" fill="#76bd34"/>
<circle cx="584.4" cy="431.0" r="3.55" fill="#76bd34"/>
<circle cx="584.4" cy="407.0" r="3.55" fill="#b02ecc"/>
<circle cx="588.0" cy="426.5" r="3.55" fill="#b02ecc"/>
<circle cx="582.6" cy="441.5" r="3.55" fill="#b02ecc"/>
<circle cx="572.0" cy="438.0" r="3.55" fill="#b02ecc"/>
<circle cx="575.5" cy="445.0" r="3.55" fill="#b02ecc"/>
<circle cx="550.7" cy="442.4" r="3.55" fill="#b02ecc"/>
<circle cx="579.0" cy="432.7" r="3.55" fill="#f9a013"/>
<circle cx="589.7" cy="432.7" r="3.55" fill="#f9a013"/>
<circle cx="485.6" cy="411.7" r="3.55" fill="#f9a013"/>
<circle cx="489.7" cy="407.0" r="3.55" fill="#f9a013"/>
<circle cx="483.6" cy="415.0" r="3.55" fill="#f9a013"/>
<circle cx="496.4" cy="415.0" r="3.55" fill="#f9a013"/>
<circle cx="487.0" cy="425.0" r="3.55" fill="#f9a013"/>
<circle cx="489.7" cy="425.8" r="3.55" fill="#f9a013"/>
<circle cx="497.5" cy="415.0" r="3.55" fill="#f9a013"/>
<circle cx="509.0" cy="411.4" r="3.55" fill="#f9a013"/>
<circle cx="499.3" cy="425.6" r="3.55" fill="#f9a013"/>
<circle cx="508.0" cy="432.7" r="3.55" fill="#f9a013"/>
<circle cx="513.5" cy="440.6" r="3.55" fill="#f9a013"/>
<circle cx="504.6" cy="436.2" r="3.55" fill="#f9a013"/>
<circle cx="476.0" cy="410.0" r="3.55" fill="#f9a013"/>
<circle cx="480.0" cy="420.0" r="3.55" fill="#f9a013"/>
<circle cx="474.0" cy="419.0" r="3.55" fill="#f9a013"/>
<circle cx="479.0" cy="406.3" r="3.55" fill="#26a69e"/>
<circle cx="472.2" cy="425.1" r="3.55" fill="#26a69e"/>
<circle cx="478.3" cy="425.1" r="3.55" fill="#26a69e"/>
<circle cx="470.2" cy="413.0" r="3.55" fill="#a9a626"/>
<circle cx="472.9" cy="416.4" r="3.55" fill="#a9a626"/>
<circle cx="483.0" cy="430.5" r="3.55" fill="#a9a626"/>
<circle cx="477.6" cy="435.2" r="3.55" fill="#2aa9d8"/>
<circle cx="479.0" cy="439.2" r="3.55" fill="#4570d8"/>
<circle cx="491.8" cy="449.4" r="3.55" fill="#3a66a0"/>
<circle cx="497.9" cy="438.0" r="3.55" fill="#3a66a0"/>
<circle cx="513.0" cy="454.0" r="3.55" fill="#3a66a0"/>
<circle cx="488.7" cy="449.0" r="3.55" fill="#3a66a0"/>
<circle cx="501.1" cy="461.0" r="3.55" fill="#3a66a0"/>
<circle cx="496.4" cy="456.3" r="3.55" fill="#3a66a0"/>
<circle cx="484.7" cy="445.6" r="3.55" fill="#3a66a0"/>
<circle cx="511.6" cy="448.9" r="3.55" fill="#3a66a0"/>
<circle cx="508.6" cy="449.8" r="3.55" fill="#3a66a0"/>
<circle cx="503.5" cy="444.2" r="3.55" fill="#3a66a0"/>
<circle cx="515.0" cy="463.8" r="3.55" fill="#3a66a0"/>
<circle cx="498.9" cy="452.6" r="3.55" fill="#3a66a0"/>
<circle cx="506.5" cy="465.7" r="3.55" fill="#3a66a0"/>
<circle cx="495.0" cy="452.7" r="3.55" fill="#3a66a0"/>
<circle cx="485.4" cy="430.7" r="3.55" fill="#3a66a0"/>
<circle cx="483.7" cy="435.9" r="3.55" fill="#3a66a0"/>
<circle cx="481.5" cy="444.0" r="3.55" fill="#3a66a0"/>
<circle cx="502.2" cy="461.3" r="3.55" fill="#3a66a0"/>
<circle cx="514.0" cy="460.6" r="3.55" fill="#3a66a0"/>
<circle cx="490.3" cy="442.6" r="3.55" fill="#3a66a0"/>
<circle cx="485.8" cy="435.3" r="3.55" fill="#3a66a0"/>
<circle cx="488.3" cy="445.4" r="3.55" fill="#3a66a0"/>
<circle cx="503.9" cy="436.5" r="3.55" fill="#3a66a0"/>
<circle cx="494.2" cy="448.7" r="3.55" fill="#3a66a0"/>
<circle cx="519.9" cy="453.6" r="3.55" fill="#3a66a0"/>
<circle cx="500.7" cy="450.7" r="3.55" fill="#3a66a0"/>
<circle cx="517.6" cy="457.2" r="3.55" fill="#3a66a0"/>
<circle cx="516.5" cy="457.9" r="3.55" fill="#3a66a0"/>
<circle cx="495.3" cy="442.0" r="3.55" fill="#3a66a0"/>
<circle cx="480.7" cy="428.7" r="3.55" fill="#3a66a0"/>
<circle cx="487.2" cy="432.5" r="3.55" fill="#3a66a0"/>
<circle cx="493.0" cy="428.1" r="3.55" fill="#3a66a0"/>
<circle cx="482.5" cy="440.5" r="3.55" fill="#3a66a0"/>
<circle cx="489.1" cy="439.9" r="3.55" fill="#3a66a0"/>
<circle cx="494.0" cy="430.9" r="3.55" fill="#3a66a0"/>
<circle cx="498.5" cy="445.4" r="3.55" fill="#3a66a0"/>
<circle cx="481.8" cy="430.1" r="3.55" fill="#3a66a0"/>
<circle cx="493.1" cy="436.6" r="3.55" fill="#3a66a0"/>
<circle cx="516.0" cy="453.8" r="3.55" fill="#3a66a0"/>
<circle cx="489.5" cy="440.7" r="3.55" fill="#3a66a0"/>
<circle cx="501.4" cy="457.2" r="3.55" fill="#3a66a0"/>
<circle cx="492.5" cy="434.9" r="3.55" fill="#3a66a0"/>
<circle cx="515.5" cy="458.2" r="3.55" fill="#3a66a0"/>
<circle cx="514.0" cy="455.6" r="3.55" fill="#3a66a0"/>
<circle cx="488.0" cy="446.7" r="3.55" fill="#3a66a0"/>
<circle cx="479.2" cy="437.2" r="3.55" fill="#3a66a0"/>
<circle cx="489.4" cy="453.7" r="3.55" fill="#3a66a0"/>
<circle cx="487.7" cy="435.1" r="3.55" fill="#3a66a0"/>
<circle cx="486.7" cy="434.2" r="3.55" fill="#3a66a0"/>
<circle cx="505.5" cy="462.0" r="3.55" fill="#3a66a0"/>
<circle cx="515.0" cy="445.2" r="3.55" fill="#3a66a0"/>
<circle cx="506.7" cy="458.0" r="3.55" fill="#3a66a0"/>
<circle cx="518.0" cy="457.3" r="3.55" fill="#3a66a0"/>
<circle cx="511.0" cy="445.1" r="3.55" fill="#3a66a0"/>
<circle cx="492.6" cy="458.0" r="3.55" fill="#3a66a0"/>
<circle cx="483.6" cy="432.0" r="3.55" fill="#3a66a0"/>
<circle cx="517.8" cy="458.3" r="3.55" fill="#3a66a0"/>
<circle cx="521.1" cy="452.3" r="3.55" fill="#3a66a0"/>
<circle cx="493.4" cy="447.9" r="3.55" fill="#3a66a0"/>
<circle cx="520.7" cy="452.0" r="3.55" fill="#3a66a0"/>
<circle cx="501.2" cy="463.3" r="3.55" fill="#3a66a0"/>
<circle cx="497.1" cy="460.9" r="3.55" fill="#3a66a0"/>
<circle cx="489.1" cy="437.7" r="3.55" fill="#3a66a0"/>
<circle cx="488.6" cy="449.5" r="3.55" fill="#3a66a0"/>
<circle cx="489.4" cy="442.8" r="3.55" fill="#3a66a0"/>
<circle cx="493.6" cy="444.3" r="3.55" fill="#3a66a0"/>
<circle cx="503.7" cy="462.2" r="3.55" fill="#3a66a0"/>
<circle cx="500.1" cy="447.3" r="3.55" fill="#3a66a0"/>
<circle cx="497.4" cy="433.3" r="3.55" fill="#3a66a0"/>
<circle cx="485.6" cy="444.9" r="3.55" fill="#3a66a0"/>
<circle cx="509.9" cy="448.3" r="3.55" fill="#3a66a0"/>
<circle cx="492.3" cy="446.7" r="3.55" fill="#3a66a0"/>
<circle cx="502.4" cy="457.4" r="3.55" fill="#3a66a0"/>
<circle cx="482.7" cy="448.4" r="3.55" fill="#3a66a0"/>
<circle cx="488.9" cy="437.1" r="3.55" fill="#3a66a0"/>
<circle cx="512.0" cy="446.3" r="3.55" fill="#3a66a0"/>
<circle cx="502.7" cy="456.4" r="3.55" fill="#3a66a0"/>
<circle cx="505.0" cy="446.2" r="3.55" fill="#3a66a0"/>
<circle cx="500.5" cy="453.7" r="3.55" fill="#3a66a0"/>
<circle cx="497.9" cy="447.3" r="3.55" fill="#3a66a0"/>
<circle cx="508.8" cy="461.1" r="3.55" fill="#3a66a0"/>
<circle cx="502.6" cy="463.7" r="3.55" fill="#3a66a0"/>
<circle cx="483.4" cy="443.7" r="3.55" fill="#3a66a0"/>
<circle cx="481.2" cy="435.6" r="3.55" fill="#3a66a0"/>
<circle cx="512.5" cy="461.9" r="3.55" fill="#3a66a0"/>
<circle cx="527.7" cy="436.2" r="3.55" fill="#a9a626"/>
<circle cx="502.8" cy="452.0" r="3.55" fill="#a9a626"/>
<circle cx="517.0" cy="456.6" r="3.55" fill="#a9a626"/>
<circle cx="513.5" cy="462.4" r="3.55" fill="#a9a626"/>
<circle cx="484.0" cy="430.0" r="3.55" fill="#a9a626"/>
<circle cx="512.3" cy="467.2" r="3.55" fill="#b02ecc"/>
<circle cx="536.0" cy="445.4" r="3.55" fill="#b02ecc"/>
<circle cx="515.3" cy="476.2" r="3.55" fill="#b02ecc"/>
<circle cx="523.7" cy="458.5" r="3.55" fill="#b02ecc"/>
<circle cx="512.6" cy="456.4" r="3.55" fill="#b02ecc"/>
<circle cx="529.2" cy="452.9" r="3.55" fill="#b02ecc"/>
<circle cx="514.2" cy="452.1" r="3.55" fill="#b02ecc"/>
<circle cx="538.9" cy="440.7" r="3.55" fill="#b02ecc"/>
<circle cx="531.0" cy="456.7" r="3.55" fill="#b02ecc"/>
<circle cx="534.3" cy="459.5" r="3.55" fill="#b02ecc"/>
<circle cx="509.9" cy="450.1" r="3.55" fill="#b02ecc"/>
<circle cx="517.7" cy="444.9" r="3.55" fill="#b02ecc"/>
<circle cx="524.8" cy="474.6" r="3.55" fill="#b02ecc"/>
<circle cx="543.5" cy="449.8" r="3.55" fill="#b02ecc"/>
<circle cx="512.0" cy="474.9" r="3.55" fill="#b02ecc"/>
<circle cx="531.8" cy="466.6" r="3.55" fill="#b02ecc"/>
<circle cx="537.3" cy="456.2" r="3.55" fill="#b02ecc"/>
<circle cx="534.8" cy="470.5" r="3.55" fill="#b02ecc"/>
<circle cx="526.3" cy="452.9" r="3.55" fill="#b02ecc"/>
<circle cx="531.0" cy="475.2" r="3.55" fill="#b02ecc"/>
<circle cx="517.6" cy="444.9" r="3.55" fill="#b02ecc"/>
<circle cx="529.8" cy="449.1" r="3.55" fill="#b02ecc"/>
<circle cx="510.1" cy="446.1" r="3.55" fill="#b02ecc"/>
<circle cx="519.7" cy="451.6" r="3.55" fill="#b02ecc"/>
<circle cx="540.7" cy="451.0" r="3.55" fill="#b02ecc"/>
<circle cx="528.5" cy="446.8" r="3.55" fill="#b02ecc"/>
<circle cx="539.5" cy="460.9" r="3.55" fill="#b02ecc"/>
<circle cx="513.9" cy="458.0" r="3.55" fill="#b02ecc"/>
<circle cx="543.5" cy="456.4" r="3.55" fill="#b02ecc"/>
<circle cx="528.3" cy="471.7" r="3.55" fill="#b02ecc"/>
<circle cx="523.5" cy="459.3" r="3.55" fill="#b02ecc"/>
<circle cx="521.1" cy="471.6" r="3.55" fill="#b02ecc"/>
<circle cx="538.2" cy="464.2" r="3.55" fill="#b02ecc"/>
<circle cx="524.0" cy="453.2" r="3.55" fill="#b02ecc"/>
<circle cx="530.0" cy="446.0" r="3.55" fill="#f9a013"/>
<circle cx="541.0" cy="449.0" r="3.55" fill="#f9a013"/>
<circle cx="545.4" cy="455.3" r="3.55" fill="#f9a013"/>
<circle cx="527.7" cy="450.0" r="3.55" fill="#f9a013"/>
<circle cx="520.0" cy="445.0" r="3.55" fill="#f9a013"/>
<circle cx="548.0" cy="446.0" r="3.55" fill="#f9a013"/>
<circle cx="535.0" cy="441.0" r="3.55" fill="#f9a013"/>
<circle cx="511.7" cy="472.0" r="3.55" fill="#b02ecc"/>
<circle cx="515.0" cy="466.8" r="3.55" fill="#b02ecc"/>
<circle cx="517.7" cy="482.4" r="3.55" fill="#cc3a2a"/>
<circle cx="527.3" cy="461.0" r="3.55" fill="#cc3a2a"/>
<circle cx="559.3" cy="479.8" r="3.55" fill="#cc3a2a"/>
<circle cx="528.7" cy="464.0" r="3.55" fill="#cc3a2a"/>
<circle cx="529.2" cy="472.0" r="3.55" fill="#cc3a2a"/>
<circle cx="522.2" cy="471.5" r="3.55" fill="#cc3a2a"/>
<circle cx="530.1" cy="468.2" r="3.55" fill="#cc3a2a"/>
<circle cx="538.7" cy="473.6" r="3.55" fill="#cc3a2a"/>
<circle cx="524.5" cy="473.7" r="3.55" fill="#cc3a2a"/>
<circle cx="518.7" cy="469.8" r="3.55" fill="#cc3a2a"/>
<circle cx="529.8" cy="463.6" r="3.55" fill="#cc3a2a"/>
<circle cx="544.5" cy="474.6" r="3.55" fill="#cc3a2a"/>
<circle cx="553.0" cy="479.3" r="3.55" fill="#cc3a2a"/>
<circle cx="551.2" cy="487.5" r="3.55" fill="#cc3a2a"/>
<circle cx="534.3" cy="467.1" r="3.55" fill="#cc3a2a"/>
<circle cx="551.7" cy="478.8" r="3.55" fill="#cc3a2a"/>
<circle cx="560.4" cy="478.2" r="3.55" fill="#cc3a2a"/>
<circle cx="552.2" cy="485.1" r="3.55" fill="#cc3a2a"/>
<circle cx="521.2" cy="474.4" r="3.55" fill="#cc3a2a"/>
<circle cx="540.2" cy="485.9" r="3.55" fill="#cc3a2a"/>
<circle cx="555.8" cy="485.6" r="3.55" fill="#cc3a2a"/>
<circle cx="544.4" cy="488.0" r="3.55" fill="#cc3a2a"/>
<circle cx="549.5" cy="480.7" r="3.55" fill="#cc3a2a"/>
<circle cx="520.9" cy="468.3" r="3.55" fill="#cc3a2a"/>
<circle cx="519.5" cy="485.9" r="3.55" fill="#cc3a2a"/>
<circle cx="543.0" cy="478.2" r="3.55" fill="#cc3a2a"/>
<circle cx="546.6" cy="480.2" r="3.55" fill="#cc3a2a"/>
<circle cx="555.5" cy="482.7" r="3.55" fill="#cc3a2a"/>
<circle cx="540.2" cy="474.8" r="3.55" fill="#cc3a2a"/>
<circle cx="552.3" cy="464.3" r="3.55" fill="#cc3a2a"/>
<circle cx="551.9" cy="462.6" r="3.55" fill="#cc3a2a"/>
<circle cx="552.5" cy="491.1" r="3.55" fill="#cc3a2a"/>
<circle cx="539.7" cy="469.2" r="3.55" fill="#cc3a2a"/>
<circle cx="538.9" cy="480.3" r="3.55" fill="#cc3a2a"/>
<circle cx="553.9" cy="477.8" r="3.55" fill="#cc3a2a"/>
<circle cx="547.4" cy="457.9" r="3.55" fill="#cc3a2a"/>
<circle cx="521.7" cy="464.4" r="3.55" fill="#cc3a2a"/>
<circle cx="552.6" cy="466.3" r="3.55" fill="#cc3a2a"/>
<circle cx="543.5" cy="455.5" r="3.55" fill="#cc3a2a"/>
<circle cx="548.9" cy="480.6" r="3.55" fill="#cc3a2a"/>
<circle cx="549.1" cy="465.8" r="3.55" fill="#cc3a2a"/>
<circle cx="540.9" cy="472.2" r="3.55" fill="#cc3a2a"/>
<circle cx="538.2" cy="459.4" r="3.55" fill="#cc3a2a"/>
<circle cx="556.6" cy="490.8" r="3.55" fill="#cc3a2a"/>
<circle cx="537.4" cy="464.9" r="3.55" fill="#cc3a2a"/>
<circle cx="524.9" cy="490.0" r="3.55" fill="#cc3a2a"/>
<circle cx="525.0" cy="476.5" r="3.55" fill="#cc3a2a"/>
<circle cx="521.4" cy="474.4" r="3.55" fill="#cc3a2a"/>
<circle cx="556.7" cy="473.8" r="3.55" fill="#cc3a2a"/>
<circle cx="560.1" cy="481.0" r="3.55" fill="#cc3a2a"/>
<circle cx="526.0" cy="488.2" r="3.55" fill="#cc3a2a"/>
<circle cx="539.3" cy="455.9" r="3.55" fill="#cc3a2a"/>
<circle cx="537.4" cy="466.2" r="3.55" fill="#cc3a2a"/>
<circle cx="521.3" cy="467.7" r="3.55" fill="#cc3a2a"/>
<circle cx="530.4" cy="486.1" r="3.55" fill="#cc3a2a"/>
<circle cx="562.2" cy="481.4" r="3.55" fill="#cc3a2a"/>
<circle cx="533.4" cy="469.5" r="3.55" fill="#cc3a2a"/>
<circle cx="532.8" cy="470.8" r="3.55" fill="#cc3a2a"/>
<circle cx="519.3" cy="485.9" r="3.55" fill="#cc3a2a"/>
<circle cx="528.9" cy="489.6" r="3.55" fill="#cc3a2a"/>
<circle cx="527.0" cy="464.8" r="3.55" fill="#cc3a2a"/>
<circle cx="540.6" cy="462.0" r="3.55" fill="#cc3a2a"/>
<circle cx="560.0" cy="485.0" r="3.55" fill="#cc3a2a"/>
<circle cx="546.8" cy="488.8" r="3.55" fill="#cc3a2a"/>
<circle cx="562.9" cy="475.3" r="3.55" fill="#cc3a2a"/>
<circle cx="552.1" cy="471.7" r="3.55" fill="#cc3a2a"/>
<circle cx="553.1" cy="478.8" r="3.55" fill="#cc3a2a"/>
<circle cx="538.6" cy="467.7" r="3.55" fill="#cc3a2a"/>
<circle cx="529.5" cy="482.3" r="3.55" fill="#cc3a2a"/>
<circle cx="548.1" cy="466.1" r="3.55" fill="#cc3a2a"/>
<circle cx="543.0" cy="469.6" r="3.55" fill="#cc3a2a"/>
<circle cx="522.7" cy="461.0" r="3.55" fill="#cc3a2a"/>
<circle cx="524.8" cy="488.5" r="3.55" fill="#cc3a2a"/>
<circle cx="539.8" cy="463.1" r="3.55" fill="#cc3a2a"/>
<circle cx="561.1" cy="491.9" r="3.55" fill="#cc3a2a"/>
<circle cx="537.4" cy="460.2" r="3.55" fill="#cc3a2a"/>
<circle cx="524.0" cy="458.4" r="3.55" fill="#cc3a2a"/>
<circle cx="531.8" cy="458.4" r="3.55" fill="#cc3a2a"/>
<circle cx="526.4" cy="464.6" r="3.55" fill="#cc3a2a"/>
<circle cx="543.6" cy="487.8" r="3.55" fill="#cc3a2a"/>
<circle cx="553.0" cy="470.3" r="3.55" fill="#cc3a2a"/>
<circle cx="535.5" cy="474.4" r="3.55" fill="#cc3a2a"/>
<circle cx="533.6" cy="467.5" r="3.55" fill="#cc3a2a"/>
<circle cx="540.2" cy="478.3" r="3.55" fill="#cc3a2a"/>
<circle cx="528.1" cy="464.2" r="3.55" fill="#cc3a2a"/>
<circle cx="534.8" cy="471.5" r="3.55" fill="#cc3a2a"/>
<circle cx="563.6" cy="486.4" r="3.55" fill="#cc3a2a"/>
<circle cx="560.6" cy="472.5" r="3.55" fill="#cc3a2a"/>
<circle cx="534.4" cy="489.3" r="3.55" fill="#cc3a2a"/>
<circle cx="556.9" cy="486.7" r="3.55" fill="#cc3a2a"/>
<circle cx="518.8" cy="485.4" r="3.55" fill="#cc3a2a"/>
<circle cx="524.0" cy="484.6" r="3.55" fill="#cc3a2a"/>
<circle cx="531.2" cy="484.6" r="3.55" fill="#cc3a2a"/>
<circle cx="543.6" cy="483.7" r="3.55" fill="#cc3a2a"/>
<circle cx="558.7" cy="483.7" r="3.55" fill="#cc3a2a"/>
<circle cx="559.6" cy="487.2" r="3.55" fill="#cc3a2a"/>
<circle cx="565.0" cy="478.4" r="3.55" fill="#cc3a2a"/>
<circle cx="552.5" cy="473.0" r="3.55" fill="#cc3a2a"/>
<circle cx="542.7" cy="493.4" r="3.55" fill="#cc3a2a"/>
<circle cx="573.5" cy="453.7" r="3.55" fill="#cc3a2a"/>
<circle cx="557.1" cy="452.3" r="3.55" fill="#cc3a2a"/>
<circle cx="564.9" cy="460.2" r="3.55" fill="#cc3a2a"/>
<circle cx="572.9" cy="460.8" r="3.55" fill="#cc3a2a"/>
<circle cx="567.3" cy="461.5" r="3.55" fill="#cc3a2a"/>
<circle cx="563.7" cy="458.3" r="3.55" fill="#cc3a2a"/>
<circle cx="567.3" cy="454.6" r="3.55" fill="#cc3a2a"/>
<circle cx="557.4" cy="453.8" r="3.55" fill="#cc3a2a"/>
<circle cx="567.1" cy="460.5" r="3.55" fill="#cc3a2a"/>
<circle cx="557.1" cy="451.1" r="3.55" fill="#cc3a2a"/>
<circle cx="565.0" cy="458.7" r="3.55" fill="#cc3a2a"/>
<circle cx="562.4" cy="453.4" r="3.55" fill="#cc3a2a"/>
<circle cx="566.4" cy="450.2" r="3.55" fill="#cc3a2a"/>
<circle cx="560.7" cy="456.9" r="3.55" fill="#cc3a2a"/>
<circle cx="573.2" cy="459.7" r="3.55" fill="#cc3a2a"/>
<circle cx="571.8" cy="457.1" r="3.55" fill="#cc3a2a"/>
<circle cx="566.6" cy="448.6" r="3.55" fill="#76bd34"/>
<circle cx="536.5" cy="487.2" r="3.55" fill="#f9a013"/>
<circle cx="517.0" cy="477.5" r="3.55" fill="#2aa9d8"/>
<circle cx="529.0" cy="464.0" r="3.55" fill="#3a66a0"/>
<circle cx="490.4" cy="469.5" r="3.55" fill="#2aa9d8"/>
<circle cx="495.8" cy="466.0" r="3.55" fill="#2aa9d8"/>
<circle cx="487.0" cy="473.0" r="3.55" fill="#2aa9d8"/>
<circle cx="492.2" cy="474.8" r="3.55" fill="#2aa9d8"/>
<circle cx="497.5" cy="474.0" r="3.55" fill="#2aa9d8"/>
<circle cx="488.7" cy="478.4" r="3.55" fill="#2aa9d8"/>
<circle cx="493.0" cy="477.5" r="3.55" fill="#2aa9d8"/>
<circle cx="487.0" cy="489.0" r="3.55" fill="#2aa9d8"/>
<circle cx="490.4" cy="492.5" r="3.55" fill="#2aa9d8"/>
<circle cx="492.2" cy="496.0" r="3.55" fill="#2aa9d8"/>
<circle cx="481.6" cy="499.6" r="3.55" fill="#2aa9d8"/>
<circle cx="491.3" cy="498.7" r="3.55" fill="#2aa9d8"/>
<circle cx="502.8" cy="506.7" r="3.55" fill="#2aa9d8"/>
<circle cx="508.0" cy="507.6" r="3.55" fill="#2aa9d8"/>
<circle cx="494.0" cy="462.0" r="3.55" fill="#2aa9d8"/>
<circle cx="486.0" cy="466.0" r="3.55" fill="#2aa9d8"/>
<circle cx="505.5" cy="497.0" r="3.55" fill="#4570d8"/>
<circle cx="639.5" cy="369.1" r="3.55" fill="#f9a013"/>
<circle cx="687.4" cy="391.5" r="3.55" fill="#f9a013"/>
<circle cx="656.9" cy="390.0" r="3.55" fill="#f9a013"/>
<circle cx="651.7" cy="369.6" r="3.55" fill="#f9a013"/>
<circle cx="668.0" cy="402.3" r="3.55" fill="#f9a013"/>
<circle cx="646.3" cy="377.6" r="3.55" fill="#f9a013"/>
<circle cx="669.0" cy="366.7" r="3.55" fill="#f9a013"/>
<circle cx="676.6" cy="393.2" r="3.55" fill="#f9a013"/>
<circle cx="657.3" cy="367.1" r="3.55" fill="#f9a013"/>
<circle cx="688.0" cy="372.3" r="3.55" fill="#f9a013"/>
<circle cx="678.1" cy="368.3" r="3.55" fill="#f9a013"/>
<circle cx="638.6" cy="394.3" r="3.55" fill="#f9a013"/>
<circle cx="656.7" cy="366.2" r="3.55" fill="#f9a013"/>
<circle cx="638.7" cy="377.4" r="3.55" fill="#f9a013"/>
<circle cx="667.9" cy="403.5" r="3.55" fill="#f9a013"/>
<circle cx="633.7" cy="376.3" r="3.55" fill="#f9a013"/>
<circle cx="628.0" cy="376.3" r="3.55" fill="#f9a013"/>
<circle cx="683.3" cy="400.3" r="3.55" fill="#f9a013"/>
<circle cx="685.5" cy="373.1" r="3.55" fill="#f9a013"/>
<circle cx="667.9" cy="375.6" r="3.55" fill="#f9a013"/>
<circle cx="648.7" cy="373.3" r="3.55" fill="#f9a013"/>
<circle cx="642.5" cy="374.2" r="3.55" fill="#f9a013"/>
<circle cx="647.5" cy="397.3" r="3.55" fill="#f9a013"/>
<circle cx="678.3" cy="378.2" r="3.55" fill="#f9a013"/>
<circle cx="627.3" cy="380.2" r="3.55" fill="#f9a013"/>
<circle cx="648.6" cy="402.1" r="3.55" fill="#f9a013"/>
<circle cx="636.7" cy="374.8" r="3.55" fill="#f9a013"/>
<circle cx="651.1" cy="396.8" r="3.55" fill="#f9a013"/>
<circle cx="684.7" cy="369.6" r="3.55" fill="#f9a013"/>
<circle cx="673.3" cy="401.0" r="3.55" fill="#f9a013"/>
<circle cx="646.4" cy="370.3" r="3.55" fill="#f9a013"/>
<circle cx="687.2" cy="387.2" r="3.55" fill="#f9a013"/>
<circle cx="641.3" cy="392.1" r="3.55" fill="#f9a013"/>
<circle cx="644.9" cy="370.5" r="3.55" fill="#f9a013"/>
<circle cx="684.5" cy="388.1" r="3.55" fill="#f9a013"/>
<circle cx="639.4" cy="380.3" r="3.55" fill="#f9a013"/>
<circle cx="649.5" cy="369.3" r="3.55" fill="#f9a013"/>
<circle cx="652.4" cy="381.2" r="3.55" fill="#f9a013"/>
<circle cx="677.0" cy="393.2" r="3.55" fill="#f9a013"/>
<circle cx="678.3" cy="394.9" r="3.55" fill="#f9a013"/>
<circle cx="664.1" cy="373.1" r="3.55" fill="#f9a013"/>
<circle cx="645.1" cy="374.7" r="3.55" fill="#f9a013"/>
<circle cx="637.0" cy="393.9" r="3.55" fill="#f9a013"/>
<circle cx="626.2" cy="384.1" r="3.55" fill="#f9a013"/>
<circle cx="630.4" cy="381.4" r="3.55" fill="#f9a013"/>
<circle cx="670.8" cy="378.9" r="3.55" fill="#f9a013"/>
<circle cx="639.5" cy="377.4" r="3.55" fill="#f9a013"/>
<circle cx="664.9" cy="390.0" r="3.55" fill="#f9a013"/>
<circle cx="673.4" cy="398.5" r="3.55" fill="#f9a013"/>
<circle cx="667.9" cy="362.9" r="3.55" fill="#f9a013"/>
<circle cx="679.5" cy="371.4" r="3.55" fill="#f9a013"/>
<circle cx="661.4" cy="375.3" r="3.55" fill="#f9a013"/>
<circle cx="672.7" cy="366.8" r="3.55" fill="#f9a013"/>
<circle cx="640.3" cy="369.0" r="3.55" fill="#f9a013"/>
<circle cx="662.2" cy="373.0" r="3.55" fill="#f9a013"/>
<circle cx="657.5" cy="368.3" r="3.55" fill="#f9a013"/>
<circle cx="677.4" cy="389.0" r="3.55" fill="#f9a013"/>
<circle cx="655.3" cy="397.1" r="3.55" fill="#f9a013"/>
<circle cx="679.5" cy="401.8" r="3.55" fill="#f9a013"/>
<circle cx="631.9" cy="366.3" r="3.55" fill="#f9a013"/>
<circle cx="688.2" cy="385.6" r="3.55" fill="#f9a013"/>
<circle cx="685.4" cy="375.2" r="3.55" fill="#f9a013"/>
<circle cx="681.2" cy="379.0" r="3.55" fill="#f9a013"/>
<circle cx="641.2" cy="395.1" r="3.55" fill="#f9a013"/>
<circle cx="663.3" cy="387.4" r="3.55" fill="#f9a013"/>
<circle cx="638.4" cy="375.1" r="3.55" fill="#f9a013"/>
<circle cx="633.3" cy="367.0" r="3.55" fill="#f9a013"/>
<circle cx="640.8" cy="386.4" r="3.55" fill="#f9a013"/>
<circle cx="667.0" cy="367.0" r="3.55" fill="#f9a013"/>
<circle cx="668.8" cy="366.1" r="3.55" fill="#f9a013"/>
<circle cx="644.6" cy="367.0" r="3.55" fill="#f9a013"/>
<circle cx="676.5" cy="383.9" r="3.55" fill="#f9a013"/>
<circle cx="650.1" cy="384.0" r="3.55" fill="#f9a013"/>
<circle cx="666.2" cy="361.5" r="3.55" fill="#f9a013"/>
<circle cx="634.8" cy="391.1" r="3.55" fill="#f9a013"/>
<circle cx="651.0" cy="370.9" r="3.55" fill="#f9a013"/>
<circle cx="644.6" cy="384.8" r="3.55" fill="#f9a013"/>
<circle cx="647.6" cy="377.4" r="3.55" fill="#f9a013"/>
<circle cx="648.0" cy="366.7" r="3.55" fill="#f9a013"/>
<circle cx="672.1" cy="367.0" r="3.55" fill="#f9a013"/>
<circle cx="652.0" cy="397.2" r="3.55" fill="#f9a013"/>
<circle cx="650.8" cy="400.3" r="3.55" fill="#f9a013"/>
<circle cx="654.4" cy="365.0" r="3.55" fill="#f9a013"/>
<circle cx="666.3" cy="401.6" r="3.55" fill="#f9a013"/>
<circle cx="629.9" cy="387.5" r="3.55" fill="#f9a013"/>
<circle cx="648.5" cy="381.7" r="3.55" fill="#f9a013"/>
<circle cx="633.6" cy="370.9" r="3.55" fill="#f9a013"/>
<circle cx="658.4" cy="402.3" r="3.55" fill="#f9a013"/>
<circle cx="631.2" cy="381.0" r="3.55" fill="#f9a013"/>
<circle cx="637.0" cy="363.2" r="3.55" fill="#f9a013"/>
<circle cx="655.9" cy="359.6" r="3.55" fill="#f9a013"/>
<circle cx="685.1" cy="376.0" r="3.55" fill="#f9a013"/>
<circle cx="732.3" cy="440.4" r="3.55" fill="#f9a013"/>
<circle cx="678.0" cy="382.5" r="3.55" fill="#f9a013"/>
<circle cx="700.3" cy="403.9" r="3.55" fill="#f9a013"/>
<circle cx="672.1" cy="386.2" r="3.55" fill="#f9a013"/>
<circle cx="702.8" cy="401.1" r="3.55" fill="#f9a013"/>
<circle cx="684.8" cy="396.5" r="3.55" fill="#f9a013"/>
<circle cx="664.5" cy="383.8" r="3.55" fill="#f9a013"/>
<circle cx="668.1" cy="374.7" r="3.55" fill="#f9a013"/>
<circle cx="711.0" cy="414.1" r="3.55" fill="#f9a013"/>
<circle cx="685.7" cy="395.2" r="3.55" fill="#f9a013"/>
<circle cx="699.5" cy="399.6" r="3.55" fill="#f9a013"/>
<circle cx="691.7" cy="402.7" r="3.55" fill="#f9a013"/>
<circle cx="698.7" cy="408.1" r="3.55" fill="#f9a013"/>
<circle cx="722.2" cy="421.4" r="3.55" fill="#f9a013"/>
<circle cx="695.7" cy="398.0" r="3.55" fill="#f9a013"/>
<circle cx="692.0" cy="399.8" r="3.55" fill="#f9a013"/>
<circle cx="697.4" cy="407.8" r="3.55" fill="#f9a013"/>
<circle cx="670.5" cy="386.2" r="3.55" fill="#f9a013"/>
<circle cx="697.7" cy="406.0" r="3.55" fill="#f9a013"/>
<circle cx="699.4" cy="392.8" r="3.55" fill="#f9a013"/>
<circle cx="734.8" cy="435.1" r="3.55" fill="#f9a013"/>
<circle cx="720.8" cy="435.3" r="3.55" fill="#f9a013"/>
<circle cx="708.9" cy="410.4" r="3.55" fill="#f9a013"/>
<circle cx="678.5" cy="392.7" r="3.55" fill="#f9a013"/>
<circle cx="663.7" cy="385.0" r="3.55" fill="#f9a013"/>
<circle cx="679.5" cy="383.2" r="3.55" fill="#f9a013"/>
<circle cx="720.1" cy="428.7" r="3.55" fill="#f9a013"/>
<circle cx="727.4" cy="433.9" r="3.55" fill="#f9a013"/>
<circle cx="701.0" cy="399.1" r="3.55" fill="#f9a013"/>
<circle cx="671.2" cy="393.7" r="3.55" fill="#f9a013"/>
<circle cx="721.6" cy="413.5" r="3.55" fill="#f9a013"/>
<circle cx="717.7" cy="426.7" r="3.55" fill="#f9a013"/>
<circle cx="711.0" cy="420.2" r="3.55" fill="#f9a013"/>
<circle cx="708.2" cy="414.5" r="3.55" fill="#f9a013"/>
<circle cx="676.1" cy="385.3" r="3.55" fill="#f9a013"/>
<circle cx="698.7" cy="395.4" r="3.55" fill="#f9a013"/>
<circle cx="736.5" cy="441.2" r="3.55" fill="#f9a013"/>
<circle cx="720.9" cy="420.2" r="3.55" fill="#f9a013"/>
<circle cx="714.0" cy="427.5" r="3.55" fill="#f9a013"/>
<circle cx="684.2" cy="398.1" r="3.55" fill="#f9a013"/>
<circle cx="711.6" cy="408.7" r="3.55" fill="#f9a013"/>
<circle cx="653.6" cy="373.2" r="3.55" fill="#f9a013"/>
<circle cx="710.6" cy="413.7" r="3.55" fill="#f9a013"/>
<circle cx="724.9" cy="431.3" r="3.55" fill="#f9a013"/>
<circle cx="707.5" cy="409.2" r="3.55" fill="#f9a013"/>
<circle cx="685.6" cy="394.7" r="3.55" fill="#f9a013"/>
<circle cx="680.8" cy="391.0" r="3.55" fill="#f9a013"/>
<circle cx="679.6" cy="388.4" r="3.55" fill="#f9a013"/>
<circle cx="677.9" cy="381.5" r="3.55" fill="#f9a013"/>
<circle cx="667.4" cy="387.8" r="3.55" fill="#f9a013"/>
<circle cx="732.7" cy="431.7" r="3.55" fill="#f9a013"/>
<circle cx="676.3" cy="393.9" r="3.55" fill="#f9a013"/>
<circle cx="705.5" cy="411.7" r="3.55" fill="#f9a013"/>
<circle cx="705.0" cy="404.6" r="3.55" fill="#f9a013"/>
<circle cx="687.4" cy="384.7" r="3.55" fill="#f9a013"/>
<circle cx="704.1" cy="403.7" r="3.55" fill="#f9a013"/>
<circle cx="669.0" cy="374.2" r="3.55" fill="#f9a013"/>
<circle cx="713.0" cy="403.8" r="3.55" fill="#f9a013"/>
<circle cx="679.0" cy="388.6" r="3.55" fill="#f9a013"/>
<circle cx="717.7" cy="410.8" r="3.55" fill="#f9a013"/>
<circle cx="684.3" cy="387.9" r="3.55" fill="#f9a013"/>
<circle cx="733.7" cy="437.6" r="3.55" fill="#f9a013"/>
<circle cx="665.4" cy="381.8" r="3.55" fill="#f9a013"/>
<circle cx="704.0" cy="402.0" r="3.55" fill="#f9a013"/>
<circle cx="674.3" cy="386.1" r="3.55" fill="#f9a013"/>
<circle cx="661.1" cy="383.5" r="3.55" fill="#f9a013"/>
<circle cx="722.0" cy="422.3" r="3.55" fill="#f9a013"/>
<circle cx="684.0" cy="391.1" r="3.55" fill="#f9a013"/>
<circle cx="723.6" cy="423.3" r="3.55" fill="#f9a013"/>
<circle cx="719.9" cy="411.4" r="3.55" fill="#f9a013"/>
<circle cx="722.4" cy="430.5" r="3.55" fill="#f9a013"/>
<circle cx="684.1" cy="396.6" r="3.55" fill="#f9a013"/>
<circle cx="718.1" cy="428.6" r="3.55" fill="#f9a013"/>
<circle cx="685.1" cy="401.0" r="3.55" fill="#f9a013"/>
<circle cx="715.3" cy="416.9" r="3.55" fill="#f9a013"/>
<circle cx="734.4" cy="447.0" r="3.55" fill="#f9a013"/>
<circle cx="722.3" cy="418.6" r="3.55" fill="#f9a013"/>
<circle cx="720.1" cy="418.9" r="3.55" fill="#f9a013"/>
<circle cx="680.3" cy="383.2" r="3.55" fill="#f9a013"/>
<circle cx="726.0" cy="429.8" r="3.55" fill="#f9a013"/>
<circle cx="699.7" cy="376.3" r="3.55" fill="#f9a013"/>
<circle cx="690.8" cy="373.2" r="3.55" fill="#f9a013"/>
<circle cx="709.4" cy="391.0" r="3.55" fill="#f9a013"/>
<circle cx="709.5" cy="394.1" r="3.55" fill="#f9a013"/>
<circle cx="700.2" cy="396.5" r="3.55" fill="#f9a013"/>
<circle cx="712.9" cy="398.7" r="3.55" fill="#f9a013"/>
<circle cx="693.0" cy="378.2" r="3.55" fill="#f9a013"/>
<circle cx="693.1" cy="373.0" r="3.55" fill="#f9a013"/>
<circle cx="713.7" cy="396.4" r="3.55" fill="#f9a013"/>
<circle cx="707.8" cy="396.8" r="3.55" fill="#f9a013"/>
<circle cx="707.7" cy="380.6" r="3.55" fill="#f9a013"/>
<circle cx="692.8" cy="374.9" r="3.55" fill="#f9a013"/>
<circle cx="698.9" cy="384.7" r="3.55" fill="#f9a013"/>
<circle cx="697.9" cy="393.5" r="3.55" fill="#f9a013"/>
<circle cx="700.3" cy="381.6" r="3.55" fill="#f9a013"/>
<circle cx="713.8" cy="390.5" r="3.55" fill="#f9a013"/>
<circle cx="702.2" cy="395.2" r="3.55" fill="#f9a013"/>
<circle cx="699.7" cy="393.1" r="3.55" fill="#f9a013"/>
<circle cx="705.1" cy="378.5" r="3.55" fill="#f9a013"/>
<circle cx="711.3" cy="401.3" r="3.55" fill="#f9a013"/>
<circle cx="703.8" cy="395.9" r="3.55" fill="#f9a013"/>
<circle cx="695.2" cy="386.8" r="3.55" fill="#f9a013"/>
<circle cx="638.0" cy="436.3" r="3.55" fill="#f9a013"/>
<circle cx="635.1" cy="407.9" r="3.55" fill="#f9a013"/>
<circle cx="654.2" cy="420.9" r="3.55" fill="#f9a013"/>
<circle cx="627.1" cy="427.3" r="3.55" fill="#f9a013"/>
<circle cx="625.7" cy="434.2" r="3.55" fill="#f9a013"/>
<circle cx="654.1" cy="434.2" r="3.55" fill="#f9a013"/>
<circle cx="650.9" cy="414.4" r="3.55" fill="#f9a013"/>
<circle cx="640.5" cy="416.2" r="3.55" fill="#f9a013"/>
<circle cx="631.5" cy="410.1" r="3.55" fill="#f9a013"/>
<circle cx="663.5" cy="421.1" r="3.55" fill="#f9a013"/>
<circle cx="639.4" cy="438.7" r="3.55" fill="#f9a013"/>
<circle cx="632.7" cy="419.2" r="3.55" fill="#f9a013"/>
<circle cx="646.5" cy="432.7" r="3.55" fill="#f9a013"/>
<circle cx="656.6" cy="427.7" r="3.55" fill="#f9a013"/>
<circle cx="638.0" cy="413.0" r="3.55" fill="#f9a013"/>
<circle cx="652.5" cy="432.1" r="3.55" fill="#f9a013"/>
<circle cx="629.8" cy="418.2" r="3.55" fill="#f9a013"/>
<circle cx="657.6" cy="424.6" r="3.55" fill="#f9a013"/>
<circle cx="627.8" cy="419.3" r="3.55" fill="#f9a013"/>
<circle cx="630.8" cy="411.9" r="3.55" fill="#f9a013"/>
<circle cx="654.3" cy="436.8" r="3.55" fill="#f9a013"/>
<circle cx="629.1" cy="405.2" r="3.55" fill="#f9a013"/>
<circle cx="633.4" cy="413.0" r="3.55" fill="#f9a013"/>
<circle cx="646.0" cy="405.4" r="3.55" fill="#f9a013"/>
<circle cx="637.1" cy="406.7" r="3.55" fill="#f9a013"/>
<circle cx="666.9" cy="431.5" r="3.55" fill="#f9a013"/>
<circle cx="626.7" cy="415.7" r="3.55" fill="#f9a013"/>
<circle cx="667.3" cy="434.6" r="3.55" fill="#f9a013"/>
<circle cx="655.7" cy="418.0" r="3.55" fill="#f9a013"/>
<circle cx="631.0" cy="427.3" r="3.55" fill="#f9a013"/>
<circle cx="626.9" cy="407.5" r="3.55" fill="#f9a013"/>
<circle cx="639.9" cy="399.6" r="3.55" fill="#f9a013"/>
<circle cx="640.4" cy="434.4" r="3.55" fill="#f9a013"/>
<circle cx="653.9" cy="421.0" r="3.55" fill="#f9a013"/>
<circle cx="651.1" cy="419.3" r="3.55" fill="#f9a013"/>
<circle cx="628.5" cy="425.8" r="3.55" fill="#f9a013"/>
<circle cx="640.6" cy="432.1" r="3.55" fill="#f9a013"/>
<circle cx="663.8" cy="417.8" r="3.55" fill="#f9a013"/>
<circle cx="648.4" cy="432.5" r="3.55" fill="#f9a013"/>
<circle cx="641.4" cy="408.5" r="3.55" fill="#f9a013"/>
<circle cx="655.2" cy="438.5" r="3.55" fill="#f9a013"/>
<circle cx="657.6" cy="430.2" r="3.55" fill="#f9a013"/>
<circle cx="661.2" cy="429.3" r="3.55" fill="#f9a013"/>
<circle cx="651.5" cy="418.9" r="3.55" fill="#f9a013"/>
<circle cx="636.4" cy="426.9" r="3.55" fill="#f9a013"/>
<circle cx="626.5" cy="417.3" r="3.55" fill="#f9a013"/>
<circle cx="658.0" cy="430.8" r="3.55" fill="#f9a013"/>
<circle cx="651.0" cy="409.5" r="3.55" fill="#f9a013"/>
<circle cx="641.5" cy="418.9" r="3.55" fill="#f9a013"/>
<circle cx="650.6" cy="416.8" r="3.55" fill="#f9a013"/>
<circle cx="653.1" cy="440.8" r="3.55" fill="#f9a013"/>
<circle cx="630.4" cy="428.1" r="3.55" fill="#f9a013"/>
<circle cx="657.8" cy="415.9" r="3.55" fill="#f9a013"/>
<circle cx="644.5" cy="442.8" r="3.55" fill="#f9a013"/>
<circle cx="623.8" cy="423.0" r="3.55" fill="#f9a013"/>
<circle cx="675.0" cy="420.0" r="3.55" fill="#f9a013"/>
<circle cx="680.0" cy="432.0" r="3.55" fill="#f9a013"/>
<circle cx="684.0" cy="440.0" r="3.55" fill="#f9a013"/>
<circle cx="678.0" cy="404.0" r="3.55" fill="#f9a013"/>
<circle cx="686.0" cy="422.0" r="3.55" fill="#f9a013"/>
<circle cx="694.0" cy="415.0" r="3.55" fill="#f9a013"/>
<circle cx="700.0" cy="425.0" r="3.55" fill="#f9a013"/>
<circle cx="605.4" cy="441.3" r="3.55" fill="#f9a013"/>
<circle cx="629.4" cy="439.3" r="3.55" fill="#f9a013"/>
<circle cx="636.1" cy="438.7" r="3.55" fill="#f9a013"/>
<circle cx="645.1" cy="438.5" r="3.55" fill="#f9a013"/>
<circle cx="627.2" cy="437.3" r="3.55" fill="#f9a013"/>
<circle cx="645.3" cy="440.9" r="3.55" fill="#f9a013"/>
<circle cx="603.9" cy="436.2" r="3.55" fill="#f9a013"/>
<circle cx="592.8" cy="435.8" r="3.55" fill="#f9a013"/>
<circle cx="590.4" cy="435.5" r="3.55" fill="#f9a013"/>
<circle cx="646.1" cy="437.0" r="3.55" fill="#f9a013"/>
<circle cx="610.3" cy="442.0" r="3.55" fill="#f9a013"/>
<circle cx="631.0" cy="441.1" r="3.55" fill="#f9a013"/>
<circle cx="619.8" cy="436.8" r="3.55" fill="#f9a013"/>
<circle cx="656.2" cy="440.8" r="3.55" fill="#f9a013"/>
<circle cx="628.9" cy="437.0" r="3.55" fill="#f9a013"/>
<circle cx="667.9" cy="442.7" r="3.55" fill="#f9a013"/>
<circle cx="659.7" cy="439.9" r="3.55" fill="#f9a013"/>
<circle cx="614.5" cy="436.2" r="3.55" fill="#f9a013"/>
<circle cx="657.2" cy="443.1" r="3.55" fill="#f9a013"/>
<circle cx="610.9" cy="436.9" r="3.55" fill="#f9a013"/>
<circle cx="622.4" cy="435.5" r="3.55" fill="#f9a013"/>
<circle cx="647.4" cy="437.1" r="3.55" fill="#f9a013"/>
<circle cx="614.6" cy="438.7" r="3.55" fill="#f9a013"/>
<circle cx="643.5" cy="437.2" r="3.55" fill="#f9a013"/>
<circle cx="742.7" cy="400.8" r="3.55" fill="#f9a013"/>
<circle cx="747.6" cy="395.8" r="3.55" fill="#f9a013"/>
<circle cx="759.0" cy="414.0" r="3.55" fill="#f9a013"/>
<circle cx="749.3" cy="427.0" r="3.55" fill="#f9a013"/>
<circle cx="734.5" cy="453.3" r="3.55" fill="#f9a013"/>
<circle cx="731.2" cy="471.4" r="3.55" fill="#f9a013"/>
<circle cx="751.0" cy="460.0" r="3.55" fill="#f9a013"/>
<circle cx="714.8" cy="479.6" r="3.55" fill="#f9a013"/>
<circle cx="672.0" cy="451.7" r="3.55" fill="#f9a013"/>
<circle cx="685.0" cy="440.0" r="3.55" fill="#f9a013"/>
<circle cx="706.0" cy="374.0" r="3.55" fill="#f9a013"/>
<circle cx="712.0" cy="378.0" r="3.55" fill="#f9a013"/>
<circle cx="787.3" cy="472.9" r="3.55" fill="#f9a013"/>
<circle cx="786.4" cy="466.6" r="3.55" fill="#f9a013"/>
<circle cx="776.9" cy="418.5" r="3.55" fill="#f9a013"/>
<circle cx="755.9" cy="408.8" r="3.55" fill="#f9a013"/>
<circle cx="760.9" cy="465.9" r="3.55" fill="#f9a013"/>
<circle cx="765.2" cy="409.7" r="3.55" fill="#f9a013"/>
<circle cx="786.4" cy="467.3" r="3.55" fill="#f9a013"/>
<circle cx="775.1" cy="466.3" r="3.55" fill="#f9a013"/>
<circle cx="777.4" cy="476.5" r="3.55" fill="#f9a013"/>
<circle cx="781.9" cy="471.5" r="3.55" fill="#f9a013"/>
<circle cx="759.5" cy="458.4" r="3.55" fill="#f9a013"/>
<circle cx="772.2" cy="462.8" r="3.55" fill="#f9a013"/>
<circle cx="768.7" cy="475.4" r="3.55" fill="#f9a013"/>
<circle cx="773.1" cy="419.8" r="3.55" fill="#f9a013"/>
<circle cx="760.9" cy="408.5" r="3.55" fill="#f9a013"/>
<circle cx="770.7" cy="401.3" r="3.55" fill="#f9a013"/>
<circle cx="769.7" cy="409.0" r="3.55" fill="#f9a013"/>
<circle cx="770.7" cy="440.8" r="3.55" fill="#f9a013"/>
<circle cx="772.5" cy="473.7" r="3.55" fill="#f9a013"/>
<circle cx="769.8" cy="446.6" r="3.55" fill="#f9a013"/>
<circle cx="777.3" cy="471.7" r="3.55" fill="#f9a013"/>
<circle cx="766.2" cy="433.7" r="3.55" fill="#f9a013"/>
<circle cx="788.5" cy="402.8" r="3.55" fill="#f9a013"/>
<circle cx="776.2" cy="453.3" r="3.55" fill="#f9a013"/>
<circle cx="777.9" cy="479.8" r="3.55" fill="#f9a013"/>
<circle cx="771.4" cy="439.6" r="3.55" fill="#f9a013"/>
<circle cx="786.1" cy="399.1" r="3.55" fill="#f9a013"/>
<circle cx="779.3" cy="452.3" r="3.55" fill="#f9a013"/>
<circle cx="765.9" cy="438.7" r="3.55" fill="#f9a013"/>
<circle cx="772.0" cy="465.4" r="3.55" fill="#f9a013"/>
<circle cx="760.0" cy="435.2" r="3.55" fill="#f9a013"/>
<circle cx="768.1" cy="445.9" r="3.55" fill="#f9a013"/>
<circle cx="783.4" cy="422.4" r="3.55" fill="#f9a013"/>
<circle cx="783.5" cy="432.3" r="3.55" fill="#f9a013"/>
<circle cx="771.1" cy="420.5" r="3.55" fill="#f9a013"/>
<circle cx="776.9" cy="467.3" r="3.55" fill="#f9a013"/>
<circle cx="764.6" cy="424.5" r="3.55" fill="#f9a013"/>
<circle cx="763.4" cy="448.8" r="3.55" fill="#f9a013"/>
<circle cx="776.1" cy="466.6" r="3.55" fill="#f9a013"/>
<circle cx="785.7" cy="445.1" r="3.55" fill="#f9a013"/>
<circle cx="787.0" cy="450.8" r="3.55" fill="#f9a013"/>
<circle cx="777.0" cy="467.0" r="3.55" fill="#f9a013"/>
<circle cx="786.6" cy="451.1" r="3.55" fill="#f9a013"/>
<circle cx="775.4" cy="452.4" r="3.55" fill="#f9a013"/>
<circle cx="778.5" cy="449.7" r="3.55" fill="#f9a013"/>
<circle cx="777.9" cy="415.1" r="3.55" fill="#f9a013"/>
<circle cx="777.3" cy="437.2" r="3.55" fill="#f9a013"/>
<circle cx="781.0" cy="405.1" r="3.55" fill="#f9a013"/>
<circle cx="781.4" cy="478.3" r="3.55" fill="#f9a013"/>
<circle cx="776.9" cy="429.2" r="3.55" fill="#f9a013"/>
<circle cx="783.3" cy="466.8" r="3.55" fill="#f9a013"/>
<circle cx="773.4" cy="419.2" r="3.55" fill="#f9a013"/>
<circle cx="763.5" cy="434.0" r="3.55" fill="#f9a013"/>
<circle cx="764.1" cy="434.8" r="3.55" fill="#f9a013"/>
<circle cx="776.4" cy="480.0" r="3.55" fill="#f9a013"/>
<circle cx="754.1" cy="447.1" r="3.55" fill="#f9a013"/>
<circle cx="782.8" cy="447.8" r="3.55" fill="#f9a013"/>
<circle cx="786.9" cy="436.2" r="3.55" fill="#f9a013"/>
<circle cx="774.5" cy="480.4" r="3.55" fill="#f9a013"/>
<circle cx="789.3" cy="438.8" r="3.55" fill="#f9a013"/>
<circle cx="767.7" cy="405.2" r="3.55" fill="#f9a013"/>
<circle cx="776.5" cy="415.1" r="3.55" fill="#f9a013"/>
<circle cx="779.3" cy="417.8" r="3.55" fill="#f9a013"/>
<circle cx="779.9" cy="412.9" r="3.55" fill="#f9a013"/>
<circle cx="779.1" cy="473.0" r="3.55" fill="#f9a013"/>
<circle cx="779.7" cy="403.6" r="3.55" fill="#f9a013"/>
<circle cx="775.9" cy="459.8" r="3.55" fill="#f9a013"/>
<circle cx="783.1" cy="403.2" r="3.55" fill="#f9a013"/>
<circle cx="763.8" cy="461.6" r="3.55" fill="#f9a013"/>
<circle cx="770.5" cy="401.4" r="3.55" fill="#f9a013"/>
<circle cx="766.0" cy="447.7" r="3.55" fill="#f9a013"/>
<circle cx="768.7" cy="456.9" r="3.55" fill="#f9a013"/>
<circle cx="765.8" cy="454.0" r="3.55" fill="#f9a013"/>
<circle cx="775.9" cy="433.6" r="3.55" fill="#f9a013"/>
<circle cx="766.7" cy="466.8" r="3.55" fill="#f9a013"/>
<circle cx="787.9" cy="466.6" r="3.55" fill="#f9a013"/>
<circle cx="773.5" cy="422.3" r="3.55" fill="#f9a013"/>
<circle cx="778.7" cy="470.5" r="3.55" fill="#f9a013"/>
<circle cx="764.6" cy="450.5" r="3.55" fill="#f9a013"/>
<circle cx="789.1" cy="470.8" r="3.55" fill="#f9a013"/>
<circle cx="774.8" cy="423.8" r="3.55" fill="#f9a013"/>
<circle cx="768.3" cy="475.9" r="3.55" fill="#f9a013"/>
<circle cx="766.3" cy="457.6" r="3.55" fill="#f9a013"/>
<circle cx="774.9" cy="476.7" r="3.55" fill="#f9a013"/>
<circle cx="782.7" cy="421.5" r="3.55" fill="#f9a013"/>
<circle cx="740.0" cy="476.0" r="3.55" fill="#f9a013"/>
<circle cx="746.0" cy="482.0" r="3.55" fill="#f9a013"/>
<circle cx="770.0" cy="478.0" r="3.55" fill="#f9a013"/>
<circle cx="760.0" cy="488.0" r="3.55" fill="#f9a013"/>
<circle cx="780.0" cy="470.0" r="3.55" fill="#f9a013"/>
<circle cx="614.1" cy="411.9" r="3.55" fill="#76bd34"/>
<circle cx="629.0" cy="423.6" r="3.55" fill="#76bd34"/>
<circle cx="628.8" cy="422.8" r="3.55" fill="#76bd34"/>
<circle cx="619.7" cy="399.7" r="3.55" fill="#76bd34"/>
<circle cx="630.3" cy="420.5" r="3.55" fill="#76bd34"/>
<circle cx="624.0" cy="424.6" r="3.55" fill="#76bd34"/>
<circle cx="611.2" cy="392.3" r="3.55" fill="#76bd34"/>
<circle cx="619.0" cy="420.1" r="3.55" fill="#76bd34"/>
<circle cx="605.6" cy="418.3" r="3.55" fill="#76bd34"/>
<circle cx="621.1" cy="415.4" r="3.55" fill="#76bd34"/>
<circle cx="615.7" cy="397.1" r="3.55" fill="#76bd34"/>
<circle cx="607.7" cy="418.3" r="3.55" fill="#76bd34"/>
<circle cx="628.1" cy="406.9" r="3.55" fill="#76bd34"/>
<circle cx="627.3" cy="398.1" r="3.55" fill="#76bd34"/>
<circle cx="620.0" cy="424.0" r="3.55" fill="#76bd34"/>
<circle cx="631.6" cy="409.4" r="3.55" fill="#76bd34"/>
<circle cx="616.1" cy="412.0" r="3.55" fill="#76bd34"/>
<circle cx="605.2" cy="396.5" r="3.55" fill="#76bd34"/>
<circle cx="604.9" cy="416.3" r="3.55" fill="#76bd34"/>
<circle cx="611.8" cy="411.0" r="3.55" fill="#76bd34"/>
<circle cx="613.3" cy="409.2" r="3.55" fill="#76bd34"/>
<circle cx="602.0" cy="413.7" r="3.55" fill="#76bd34"/>
<circle cx="627.9" cy="395.1" r="3.55" fill="#76bd34"/>
<circle cx="620.7" cy="402.5" r="3.55" fill="#76bd34"/>
<circle cx="630.9" cy="408.0" r="3.55" fill="#76bd34"/>
<circle cx="619.6" cy="399.2" r="3.55" fill="#76bd34"/>
<circle cx="627.6" cy="405.6" r="3.55" fill="#76bd34"/>
<circle cx="634.0" cy="418.9" r="3.55" fill="#76bd34"/>
<circle cx="629.1" cy="426.6" r="3.55" fill="#76bd34"/>
<circle cx="605.6" cy="396.0" r="3.55" fill="#76bd34"/>
<circle cx="619.2" cy="423.0" r="3.55" fill="#76bd34"/>
<circle cx="615.4" cy="425.9" r="3.55" fill="#76bd34"/>
<circle cx="620.7" cy="404.5" r="3.55" fill="#76bd34"/>
<circle cx="607.8" cy="411.0" r="3.55" fill="#76bd34"/>
<circle cx="622.3" cy="426.3" r="3.55" fill="#76bd34"/>
<circle cx="623.4" cy="404.3" r="3.55" fill="#76bd34"/>
<circle cx="615.0" cy="395.2" r="3.55" fill="#76bd34"/>
<circle cx="607.7" cy="402.7" r="3.55" fill="#76bd34"/>
<circle cx="627.9" cy="416.7" r="3.55" fill="#76bd34"/>
<circle cx="626.7" cy="425.6" r="3.55" fill="#76bd34"/>
<circle cx="623.7" cy="400.7" r="3.55" fill="#76bd34"/>
<circle cx="620.5" cy="418.6" r="3.55" fill="#76bd34"/>
<circle cx="602.0" cy="401.6" r="3.55" fill="#76bd34"/>
<circle cx="607.8" cy="393.8" r="3.55" fill="#76bd34"/>
<circle cx="616.3" cy="395.6" r="3.55" fill="#76bd34"/>
<circle cx="607.1" cy="394.6" r="3.55" fill="#76bd34"/>
<circle cx="625.3" cy="396.6" r="3.55" fill="#76bd34"/>
<circle cx="630.9" cy="423.7" r="3.55" fill="#76bd34"/>
<circle cx="622.8" cy="394.6" r="3.55" fill="#b02ecc"/>
<circle cx="636.8" cy="397.7" r="3.55" fill="#b02ecc"/>
<circle cx="629.0" cy="392.8" r="3.55" fill="#b02ecc"/>
<circle cx="636.5" cy="395.1" r="3.55" fill="#b02ecc"/>
<circle cx="632.6" cy="389.4" r="3.55" fill="#b02ecc"/>
<circle cx="624.4" cy="388.0" r="3.55" fill="#b02ecc"/>
<circle cx="634.3" cy="396.4" r="3.55" fill="#b02ecc"/>
<circle cx="625.3" cy="394.0" r="3.55" fill="#b02ecc"/>
<circle cx="623.1" cy="391.6" r="3.55" fill="#b02ecc"/>
<circle cx="636.8" cy="392.7" r="3.55" fill="#b02ecc"/>
<circle cx="623.4" cy="395.3" r="3.55" fill="#b02ecc"/>
<circle cx="633.4" cy="390.6" r="3.55" fill="#b02ecc"/>
<circle cx="596.8" cy="397.0" r="3.55" fill="#b02ecc"/>
<circle cx="583.5" cy="406.7" r="3.55" fill="#b02ecc"/>
<circle cx="584.4" cy="442.0" r="3.55" fill="#b02ecc"/>
<circle cx="587.0" cy="426.0" r="3.55" fill="#b02ecc"/>
<circle cx="602.0" cy="428.0" r="3.55" fill="#b02ecc"/>
<circle cx="635.0" cy="421.0" r="3.55" fill="#b02ecc"/>
<circle cx="640.0" cy="411.0" r="3.55" fill="#b02ecc"/>
<circle cx="581.8" cy="412.0" r="3.55" fill="#76bd34"/>
<circle cx="588.9" cy="413.0" r="3.55" fill="#76bd34"/>
<circle cx="596.0" cy="413.0" r="3.55" fill="#76bd34"/>
<circle cx="581.8" cy="419.0" r="3.55" fill="#76bd34"/>
<circle cx="585.3" cy="431.5" r="3.55" fill="#76bd34"/>
<circle cx="596.0" cy="425.0" r="3.55" fill="#76bd34"/>
<circle cx="622.5" cy="436.0" r="3.55" fill="#b02ecc"/>
<circle cx="617.7" cy="434.8" r="3.55" fill="#b02ecc"/>
<circle cx="620.0" cy="445.9" r="3.55" fill="#b02ecc"/>
<circle cx="614.1" cy="436.1" r="3.55" fill="#b02ecc"/>
<circle cx="631.7" cy="432.8" r="3.55" fill="#b02ecc"/>
<circle cx="628.0" cy="436.1" r="3.55" fill="#b02ecc"/>
<circle cx="629.8" cy="436.8" r="3.55" fill="#b02ecc"/>
<circle cx="615.1" cy="432.0" r="3.55" fill="#b02ecc"/>
<circle cx="630.3" cy="439.4" r="3.55" fill="#b02ecc"/>
<circle cx="616.1" cy="438.1" r="3.55" fill="#b02ecc"/>
<circle cx="632.1" cy="435.1" r="3.55" fill="#b02ecc"/>
<circle cx="624.6" cy="433.9" r="3.55" fill="#b02ecc"/>
<circle cx="616.0" cy="442.8" r="3.55" fill="#b02ecc"/>
<circle cx="627.7" cy="434.8" r="3.55" fill="#b02ecc"/>
<circle cx="683.7" cy="410.0" r="3.55" fill="#76bd34"/>
<circle cx="632.4" cy="451.5" r="3.55" fill="#b02ecc"/>
<circle cx="643.1" cy="451.6" r="3.55" fill="#b02ecc"/>
<circle cx="648.9" cy="457.8" r="3.55" fill="#b02ecc"/>
<circle cx="644.3" cy="451.5" r="3.55" fill="#b02ecc"/>
<circle cx="648.9" cy="458.6" r="3.55" fill="#b02ecc"/>
<circle cx="637.7" cy="449.1" r="3.55" fill="#b02ecc"/>
<circle cx="654.7" cy="458.0" r="3.55" fill="#b02ecc"/>
<circle cx="637.6" cy="449.9" r="3.55" fill="#b02ecc"/>
<circle cx="650.6" cy="455.9" r="3.55" fill="#b02ecc"/>
<circle cx="650.6" cy="455.3" r="3.55" fill="#b02ecc"/>
<circle cx="654.4" cy="464.9" r="3.55" fill="#b02ecc"/>
<circle cx="655.9" cy="463.3" r="3.55" fill="#b02ecc"/>
<circle cx="663.3" cy="470.3" r="3.55" fill="#b02ecc"/>
<circle cx="653.4" cy="467.2" r="3.55" fill="#b02ecc"/>
<circle cx="654.6" cy="468.0" r="3.55" fill="#b02ecc"/>
<circle cx="657.3" cy="463.6" r="3.55" fill="#b02ecc"/>
<circle cx="650.6" cy="455.1" r="3.55" fill="#b02ecc"/>
<circle cx="661.0" cy="456.9" r="3.55" fill="#b02ecc"/>
<circle cx="658.5" cy="463.5" r="3.55" fill="#b02ecc"/>
<circle cx="664.4" cy="467.3" r="3.55" fill="#b02ecc"/>
<circle cx="656.9" cy="463.0" r="3.55" fill="#b02ecc"/>
<circle cx="652.6" cy="455.4" r="3.55" fill="#b02ecc"/>
<circle cx="655.1" cy="455.7" r="3.55" fill="#b02ecc"/>
<circle cx="658.8" cy="470.2" r="3.55" fill="#b02ecc"/>
<circle cx="649.9" cy="464.5" r="3.55" fill="#b02ecc"/>
<circle cx="661.9" cy="456.3" r="3.55" fill="#b02ecc"/>
<circle cx="657.6" cy="476.6" r="3.55" fill="#cc3a2a"/>
<circle cx="663.6" cy="476.6" r="3.55" fill="#38a02a"/>
<circle cx="674.9" cy="478.4" r="3.55" fill="#2aa9d8"/>
<circle cx="685.3" cy="480.5" r="3.55" fill="#2aa9d8"/>
<circle cx="683.9" cy="476.8" r="3.55" fill="#2aa9d8"/>
<circle cx="671.5" cy="476.7" r="3.55" fill="#2aa9d8"/>
<circle cx="671.7" cy="478.4" r="3.55" fill="#2aa9d8"/>
<circle cx="680.6" cy="477.3" r="3.55" fill="#2aa9d8"/>
<circle cx="678.2" cy="471.4" r="3.55" fill="#2aa9d8"/>
<circle cx="676.0" cy="480.1" r="3.55" fill="#2aa9d8"/>
<circle cx="666.5" cy="472.8" r="3.55" fill="#2aa9d8"/>
<circle cx="687.5" cy="482.7" r="3.55" fill="#2aa9d8"/>
<circle cx="680.8" cy="475.3" r="3.55" fill="#2aa9d8"/>
<circle cx="681.6" cy="475.5" r="3.55" fill="#2aa9d8"/>
<circle cx="678.5" cy="488.5" r="3.55" fill="#2aa9d8"/>
<circle cx="680.3" cy="475.0" r="3.55" fill="#2aa9d8"/>
<circle cx="678.0" cy="478.7" r="3.55" fill="#2aa9d8"/>
<circle cx="673.0" cy="483.0" r="3.55" fill="#2aa9d8"/>
<circle cx="668.8" cy="481.9" r="3.55" fill="#2aa9d8"/>
<circle cx="688.0" cy="480.3" r="3.55" fill="#2aa9d8"/>
<circle cx="672.2" cy="479.3" r="3.55" fill="#2aa9d8"/>
<circle cx="678.3" cy="473.0" r="3.55" fill="#2aa9d8"/>
<circle cx="668.9" cy="472.6" r="3.55" fill="#2aa9d8"/>
<circle cx="672.8" cy="478.1" r="3.55" fill="#2aa9d8"/>
<circle cx="672.6" cy="474.9" r="3.55" fill="#2aa9d8"/>
<circle cx="668.0" cy="480.9" r="3.55" fill="#2aa9d8"/>
<circle cx="685.3" cy="482.2" r="3.55" fill="#2aa9d8"/>
<circle cx="679.1" cy="483.0" r="3.55" fill="#2aa9d8"/>
<circle cx="670.7" cy="496.0" r="3.55" fill="#38a02a"/>
<circle cx="673.9" cy="493.5" r="3.55" fill="#38a02a"/>
<circle cx="667.5" cy="486.5" r="3.55" fill="#38a02a"/>
<circle cx="665.7" cy="494.9" r="3.55" fill="#38a02a"/>
<circle cx="669.0" cy="497.2" r="3.55" fill="#38a02a"/>
<circle cx="672.7" cy="494.2" r="3.55" fill="#38a02a"/>
<circle cx="667.2" cy="502.9" r="3.55" fill="#38a02a"/>
<circle cx="664.3" cy="481.1" r="3.55" fill="#38a02a"/>
<circle cx="670.2" cy="501.8" r="3.55" fill="#38a02a"/>
<circle cx="663.3" cy="486.0" r="3.55" fill="#38a02a"/>
<circle cx="681.1" cy="501.9" r="3.55" fill="#38a02a"/>
<circle cx="664.2" cy="489.4" r="3.55" fill="#38a02a"/>
<circle cx="668.4" cy="499.9" r="3.55" fill="#38a02a"/>
<circle cx="673.9" cy="505.3" r="3.55" fill="#38a02a"/>
<circle cx="678.2" cy="495.1" r="3.55" fill="#38a02a"/>
<circle cx="676.5" cy="502.0" r="3.55" fill="#38a02a"/>
<circle cx="677.0" cy="493.7" r="3.55" fill="#38a02a"/>
<circle cx="677.5" cy="501.0" r="3.55" fill="#38a02a"/>
<circle cx="677.1" cy="497.2" r="3.55" fill="#38a02a"/>
<circle cx="673.0" cy="492.0" r="3.55" fill="#38a02a"/>
<circle cx="677.5" cy="506.1" r="3.55" fill="#38a02a"/>
<circle cx="673.8" cy="490.8" r="3.55" fill="#38a02a"/>
<circle cx="670.5" cy="493.2" r="3.55" fill="#38a02a"/>
<circle cx="669.2" cy="496.2" r="3.55" fill="#38a02a"/>
<circle cx="669.1" cy="489.0" r="3.55" fill="#38a02a"/>
<circle cx="677.5" cy="505.3" r="3.55" fill="#38a02a"/>
<circle cx="680.0" cy="490.0" r="3.55" fill="#d24f96"/>
<circle cx="681.0" cy="495.0" r="3.55" fill="#d24f96"/>
<circle cx="683.0" cy="500.0" r="3.55" fill="#d24f96"/>
<circle cx="679.0" cy="504.0" r="3.55" fill="#d24f96"/>
<circle cx="682.0" cy="506.0" r="3.55" fill="#d24f96"/>
<circle cx="701.0" cy="493.5" r="3.55" fill="#2aa9d8"/>
<circle cx="692.8" cy="487.4" r="3.55" fill="#2aa9d8"/>
<circle cx="691.8" cy="499.3" r="3.55" fill="#2aa9d8"/>
<circle cx="703.1" cy="477.9" r="3.55" fill="#2aa9d8"/>
<circle cx="709.9" cy="510.9" r="3.55" fill="#2aa9d8"/>
<circle cx="699.1" cy="514.1" r="3.55" fill="#2aa9d8"/>
<circle cx="688.3" cy="476.1" r="3.55" fill="#2aa9d8"/>
<circle cx="702.7" cy="495.9" r="3.55" fill="#2aa9d8"/>
<circle cx="711.9" cy="508.0" r="3.55" fill="#2aa9d8"/>
<circle cx="701.5" cy="496.8" r="3.55" fill="#2aa9d8"/>
<circle cx="705.8" cy="491.1" r="3.55" fill="#2aa9d8"/>
<circle cx="697.3" cy="500.2" r="3.55" fill="#2aa9d8"/>
<circle cx="705.6" cy="497.1" r="3.55" fill="#2aa9d8"/>
<circle cx="690.6" cy="490.5" r="3.55" fill="#2aa9d8"/>
<circle cx="698.4" cy="498.7" r="3.55" fill="#2aa9d8"/>
<circle cx="702.9" cy="512.7" r="3.55" fill="#2aa9d8"/>
<circle cx="713.1" cy="495.4" r="3.55" fill="#2aa9d8"/>
<circle cx="699.4" cy="501.5" r="3.55" fill="#2aa9d8"/>
<circle cx="701.8" cy="509.9" r="3.55" fill="#2aa9d8"/>
<circle cx="692.4" cy="488.0" r="3.55" fill="#2aa9d8"/>
<circle cx="701.3" cy="478.9" r="3.55" fill="#2aa9d8"/>
<circle cx="711.3" cy="504.4" r="3.55" fill="#2aa9d8"/>
<circle cx="711.1" cy="492.5" r="3.55" fill="#2aa9d8"/>
<circle cx="692.1" cy="486.8" r="3.55" fill="#2aa9d8"/>
<circle cx="701.3" cy="496.2" r="3.55" fill="#2aa9d8"/>
<circle cx="692.9" cy="482.0" r="3.55" fill="#2aa9d8"/>
<circle cx="704.4" cy="500.5" r="3.55" fill="#2aa9d8"/>
<circle cx="698.7" cy="508.7" r="3.55" fill="#2aa9d8"/>
<circle cx="696.0" cy="504.4" r="3.55" fill="#2aa9d8"/>
<circle cx="688.1" cy="487.4" r="3.55" fill="#2aa9d8"/>
<circle cx="709.9" cy="499.8" r="3.55" fill="#2aa9d8"/>
<circle cx="705.4" cy="482.7" r="3.55" fill="#2aa9d8"/>
<circle cx="700.9" cy="498.3" r="3.55" fill="#2aa9d8"/>
<circle cx="694.9" cy="502.5" r="3.55" fill="#2aa9d8"/>
<circle cx="702.9" cy="492.1" r="3.55" fill="#2aa9d8"/>
<circle cx="691.2" cy="480.9" r="3.55" fill="#2aa9d8"/>
<circle cx="690.6" cy="481.5" r="3.55" fill="#2aa9d8"/>
<circle cx="701.6" cy="510.2" r="3.55" fill="#2aa9d8"/>
<circle cx="703.9" cy="509.5" r="3.55" fill="#2aa9d8"/>
<circle cx="689.6" cy="474.5" r="3.55" fill="#2aa9d8"/>
<circle cx="708.0" cy="488.2" r="3.55" fill="#2aa9d8"/>
<circle cx="706.6" cy="489.6" r="3.55" fill="#2aa9d8"/>
<circle cx="692.4" cy="485.7" r="3.55" fill="#2aa9d8"/>
<circle cx="703.1" cy="489.4" r="3.55" fill="#2aa9d8"/>
<circle cx="699.7" cy="491.0" r="3.55" fill="#2aa9d8"/>
<circle cx="703.1" cy="516.2" r="3.55" fill="#2aa9d8"/>
<circle cx="699.4" cy="501.3" r="3.55" fill="#2aa9d8"/>
<circle cx="694.5" cy="475.9" r="3.55" fill="#2aa9d8"/>
<circle cx="696.9" cy="503.7" r="3.55" fill="#d24f96"/>
<circle cx="701.7" cy="520.8" r="3.55" fill="#38a02a"/>
<circle cx="690.0" cy="521.5" r="3.55" fill="#38a02a"/>
<circle cx="699.5" cy="512.6" r="3.55" fill="#38a02a"/>
<circle cx="695.4" cy="522.4" r="3.55" fill="#38a02a"/>
<circle cx="693.4" cy="522.2" r="3.55" fill="#38a02a"/>
<circle cx="688.6" cy="513.8" r="3.55" fill="#38a02a"/>
<circle cx="689.9" cy="521.1" r="3.55" fill="#38a02a"/>
<circle cx="693.2" cy="519.9" r="3.55" fill="#38a02a"/>
<circle cx="688.6" cy="510.6" r="3.55" fill="#38a02a"/>
<circle cx="690.8" cy="510.8" r="3.55" fill="#38a02a"/>
<circle cx="694.1" cy="513.8" r="3.55" fill="#38a02a"/>
<circle cx="690.7" cy="511.7" r="3.55" fill="#38a02a"/>
<circle cx="687.6" cy="512.3" r="3.55" fill="#38a02a"/>
<circle cx="696.6" cy="513.1" r="3.55" fill="#38a02a"/>
<circle cx="702.0" cy="465.5" r="3.55" fill="#2aa9d8"/>
<circle cx="701.2" cy="455.9" r="3.55" fill="#2aa9d8"/>
<circle cx="710.9" cy="452.8" r="3.55" fill="#2aa9d8"/>
<circle cx="705.8" cy="468.4" r="3.55" fill="#2aa9d8"/>
<circle cx="710.5" cy="453.5" r="3.55" fill="#2aa9d8"/>
<circle cx="704.6" cy="465.9" r="3.55" fill="#2aa9d8"/>
<circle cx="704.9" cy="471.1" r="3.55" fill="#2aa9d8"/>
<circle cx="702.7" cy="470.9" r="3.55" fill="#2aa9d8"/>
<circle cx="706.6" cy="455.0" r="3.55" fill="#2aa9d8"/>
<circle cx="705.9" cy="452.9" r="3.55" fill="#2aa9d8"/>
<circle cx="709.2" cy="455.7" r="3.55" fill="#2aa9d8"/>
<circle cx="711.7" cy="462.9" r="3.55" fill="#2aa9d8"/>
<circle cx="704.8" cy="455.4" r="3.55" fill="#2aa9d8"/>
<circle cx="707.9" cy="454.7" r="3.55" fill="#2aa9d8"/>
<circle cx="672.5" cy="452.0" r="3.55" fill="#f9a013"/>
<circle cx="714.3" cy="479.5" r="3.55" fill="#f9a013"/>
<circle cx="716.6" cy="450.4" r="3.55" fill="#f9a013"/>
<circle cx="713.6" cy="452.0" r="3.55" fill="#f9a013"/>
<circle cx="727.9" cy="495.2" r="3.55" fill="#cf3e1d"/>
<circle cx="722.0" cy="506.1" r="3.55" fill="#cf3e1d"/>
<circle cx="718.0" cy="512.1" r="3.55" fill="#cf3e1d"/>
<circle cx="719.9" cy="509.1" r="3.55" fill="#cf3e1d"/>
<circle cx="722.9" cy="500.1" r="3.55" fill="#cf3e1d"/>
<circle cx="720.0" cy="494.2" r="3.55" fill="#cf3e1d"/>
<circle cx="716.5" cy="514.1" r="3.55" fill="#cf3e1d"/>
<circle cx="718.9" cy="509.2" r="3.55" fill="#cf3e1d"/>
<circle cx="715.4" cy="506.6" r="3.55" fill="#cf3e1d"/>
<circle cx="719.5" cy="505.0" r="3.55" fill="#cf3e1d"/>
<circle cx="718.7" cy="497.9" r="3.55" fill="#cf3e1d"/>
<circle cx="715.7" cy="510.6" r="3.55" fill="#cf3e1d"/>
<circle cx="718.2" cy="502.5" r="3.55" fill="#cf3e1d"/>
<circle cx="728.5" cy="512.1" r="3.55" fill="#cf3e1d"/>
<circle cx="728.1" cy="514.4" r="3.55" fill="#cf3e1d"/>
<circle cx="715.8" cy="499.2" r="3.55" fill="#cf3e1d"/>
<circle cx="714.1" cy="509.7" r="3.55" fill="#cf3e1d"/>
<circle cx="724.5" cy="501.1" r="3.55" fill="#cf3e1d"/>
<circle cx="714.8" cy="480.0" r="3.55" fill="#2aa9d8"/>
<circle cx="730.0" cy="487.0" r="3.55" fill="#2aa9d8"/>
<circle cx="742.0" cy="488.0" r="3.55" fill="#2aa9d8"/>
<circle cx="740.5" cy="464.3" r="3.55" fill="#2aa9d8"/>
<circle cx="774.5" cy="464.3" r="3.55" fill="#2aa9d8"/>
<circle cx="764.8" cy="501.5" r="3.55" fill="#2aa9d8"/>
<circle cx="724.0" cy="505.0" r="3.55" fill="#2aa9d8"/>
<circle cx="728.0" cy="512.0" r="3.55" fill="#2aa9d8"/>
<circle cx="745.4" cy="502.5" r="3.55" fill="#cf3e1d"/>
<circle cx="767.1" cy="493.5" r="3.55" fill="#cf3e1d"/>
<circle cx="778.4" cy="495.7" r="3.55" fill="#cf3e1d"/>
<circle cx="761.8" cy="492.0" r="3.55" fill="#cf3e1d"/>
<circle cx="722.8" cy="508.1" r="3.55" fill="#cf3e1d"/>
<circle cx="769.8" cy="503.7" r="3.55" fill="#cf3e1d"/>
<circle cx="717.1" cy="488.9" r="3.55" fill="#cf3e1d"/>
<circle cx="726.3" cy="492.4" r="3.55" fill="#cf3e1d"/>
<circle cx="737.0" cy="496.4" r="3.55" fill="#cf3e1d"/>
<circle cx="717.0" cy="494.8" r="3.55" fill="#cf3e1d"/>
<circle cx="762.5" cy="492.0" r="3.55" fill="#cf3e1d"/>
<circle cx="777.8" cy="500.5" r="3.55" fill="#cf3e1d"/>
<circle cx="768.5" cy="493.6" r="3.55" fill="#cf3e1d"/>
<circle cx="747.1" cy="503.1" r="3.55" fill="#cf3e1d"/>
<circle cx="740.5" cy="488.0" r="3.55" fill="#cf3e1d"/>
<circle cx="777.4" cy="505.1" r="3.55" fill="#cf3e1d"/>
<circle cx="735.8" cy="488.9" r="3.55" fill="#cf3e1d"/>
<circle cx="778.9" cy="501.4" r="3.55" fill="#cf3e1d"/>
<circle cx="717.6" cy="493.4" r="3.55" fill="#cf3e1d"/>
<circle cx="722.5" cy="505.4" r="3.55" fill="#cf3e1d"/>
<circle cx="730.0" cy="508.1" r="3.55" fill="#cf3e1d"/>
<circle cx="771.0" cy="489.9" r="3.55" fill="#cf3e1d"/>
<circle cx="766.8" cy="496.7" r="3.55" fill="#cf3e1d"/>
<circle cx="770.8" cy="506.2" r="3.55" fill="#cf3e1d"/>
<circle cx="735.4" cy="490.0" r="3.55" fill="#cf3e1d"/>
<circle cx="785.9" cy="497.3" r="3.55" fill="#cf3e1d"/>
<circle cx="784.7" cy="503.2" r="3.55" fill="#cf3e1d"/>
<circle cx="770.1" cy="506.3" r="3.55" fill="#cf3e1d"/>
<circle cx="761.7" cy="498.0" r="3.55" fill="#cf3e1d"/>
<circle cx="718.1" cy="503.4" r="3.55" fill="#cf3e1d"/>
<circle cx="747.7" cy="528.6" r="3.55" fill="#cf3e1d"/>
<circle cx="784.7" cy="510.1" r="3.55" fill="#cf3e1d"/>
<circle cx="768.0" cy="542.7" r="3.55" fill="#cf3e1d"/>
<circle cx="735.3" cy="530.2" r="3.55" fill="#cf3e1d"/>
<circle cx="787.7" cy="534.6" r="3.55" fill="#cf3e1d"/>
<circle cx="756.3" cy="516.0" r="3.55" fill="#cf3e1d"/>
<circle cx="720.4" cy="521.2" r="3.55" fill="#cf3e1d"/>
<circle cx="746.5" cy="513.7" r="3.55" fill="#cf3e1d"/>
<circle cx="739.0" cy="510.6" r="3.55" fill="#cf3e1d"/>
<circle cx="768.3" cy="536.2" r="3.55" fill="#cf3e1d"/>
<circle cx="733.6" cy="515.6" r="3.55" fill="#cf3e1d"/>
<circle cx="754.1" cy="525.4" r="3.55" fill="#cf3e1d"/>
<circle cx="785.3" cy="520.9" r="3.55" fill="#cf3e1d"/>
<circle cx="726.5" cy="531.0" r="3.55" fill="#cf3e1d"/>
<circle cx="756.6" cy="540.5" r="3.55" fill="#cf3e1d"/>
<circle cx="760.3" cy="526.1" r="3.55" fill="#cf3e1d"/>
<circle cx="772.7" cy="543.9" r="3.55" fill="#cf3e1d"/>
<circle cx="724.5" cy="517.9" r="3.55" fill="#cf3e1d"/>
<circle cx="742.7" cy="513.9" r="3.55" fill="#cf3e1d"/>
<circle cx="720.5" cy="517.5" r="3.55" fill="#cf3e1d"/>
<circle cx="749.2" cy="509.4" r="3.55" fill="#cf3e1d"/>
<circle cx="740.0" cy="526.5" r="3.55" fill="#cf3e1d"/>
<circle cx="742.9" cy="512.1" r="3.55" fill="#cf3e1d"/>
<circle cx="789.4" cy="540.0" r="3.55" fill="#cf3e1d"/>
<circle cx="788.5" cy="531.1" r="3.55" fill="#cf3e1d"/>
<circle cx="724.1" cy="527.5" r="3.55" fill="#cf3e1d"/>
<circle cx="748.1" cy="513.1" r="3.55" fill="#cf3e1d"/>
<circle cx="784.0" cy="534.9" r="3.55" fill="#cf3e1d"/>
<circle cx="764.3" cy="516.1" r="3.55" fill="#cf3e1d"/>
<circle cx="734.2" cy="510.7" r="3.55" fill="#cf3e1d"/>
<circle cx="778.1" cy="518.2" r="3.55" fill="#cf3e1d"/>
<circle cx="729.7" cy="534.6" r="3.55" fill="#cf3e1d"/>
<circle cx="778.6" cy="548.5" r="3.55" fill="#cf3e1d"/>
<circle cx="777.4" cy="539.6" r="3.55" fill="#cf3e1d"/>
<circle cx="740.2" cy="512.9" r="3.55" fill="#cf3e1d"/>
<circle cx="777.1" cy="519.4" r="3.55" fill="#cf3e1d"/>
<circle cx="743.3" cy="530.5" r="3.55" fill="#cf3e1d"/>
<circle cx="757.9" cy="534.2" r="3.55" fill="#cf3e1d"/>
<circle cx="776.7" cy="537.9" r="3.55" fill="#cf3e1d"/>
<circle cx="783.0" cy="549.4" r="3.55" fill="#cf3e1d"/>
<circle cx="752.6" cy="528.0" r="3.55" fill="#cf3e1d"/>
<circle cx="727.7" cy="518.4" r="3.55" fill="#cf3e1d"/>
<circle cx="766.9" cy="511.9" r="3.55" fill="#cf3e1d"/>
<circle cx="748.5" cy="513.2" r="3.55" fill="#cf3e1d"/>
<circle cx="778.2" cy="545.1" r="3.55" fill="#cf3e1d"/>
<circle cx="774.2" cy="524.4" r="3.55" fill="#cf3e1d"/>
<circle cx="737.0" cy="535.8" r="3.55" fill="#cf3e1d"/>
<circle cx="754.1" cy="524.2" r="3.55" fill="#cf3e1d"/>
<circle cx="741.1" cy="525.1" r="3.55" fill="#cf3e1d"/>
<circle cx="765.3" cy="543.7" r="3.55" fill="#cf3e1d"/>
<circle cx="782.9" cy="511.9" r="3.55" fill="#cf3e1d"/>
<circle cx="737.9" cy="525.3" r="3.55" fill="#cf3e1d"/>
<circle cx="757.7" cy="520.7" r="3.55" fill="#cf3e1d"/>
<circle cx="730.5" cy="508.1" r="3.55" fill="#cf3e1d"/>
<circle cx="740.0" cy="526.1" r="3.55" fill="#cf3e1d"/>
<circle cx="787.9" cy="547.6" r="3.55" fill="#cf3e1d"/>
<circle cx="780.0" cy="550.8" r="3.55" fill="#cf3e1d"/>
<circle cx="787.2" cy="533.8" r="3.55" fill="#cf3e1d"/>
<circle cx="776.0" cy="506.9" r="3.55" fill="#cf3e1d"/>
<circle cx="766.1" cy="533.2" r="3.55" fill="#cf3e1d"/>
<circle cx="738.0" cy="531.4" r="3.55" fill="#cf3e1d"/>
<circle cx="786.5" cy="527.1" r="3.55" fill="#cf3e1d"/>
<circle cx="763.9" cy="518.4" r="3.55" fill="#cf3e1d"/>
<circle cx="718.1" cy="513.1" r="3.55" fill="#cf3e1d"/>
<circle cx="766.2" cy="525.5" r="3.55" fill="#cf3e1d"/>
<circle cx="743.5" cy="531.9" r="3.55" fill="#cf3e1d"/>
<circle cx="746.8" cy="529.4" r="3.55" fill="#cf3e1d"/>
<circle cx="757.8" cy="523.0" r="3.55" fill="#cf3e1d"/>
<circle cx="724.5" cy="512.7" r="3.55" fill="#cf3e1d"/>
<circle cx="781.9" cy="530.3" r="3.55" fill="#cf3e1d"/>
<circle cx="734.8" cy="508.6" r="3.55" fill="#cf3e1d"/>
<circle cx="755.3" cy="516.1" r="3.55" fill="#cf3e1d"/>
<circle cx="752.2" cy="530.6" r="3.55" fill="#cf3e1d"/>
<circle cx="732.8" cy="531.5" r="3.55" fill="#cf3e1d"/>
<circle cx="724.4" cy="528.6" r="3.55" fill="#cf3e1d"/>
<circle cx="748.5" cy="545.4" r="3.55" fill="#cf3e1d"/>
<circle cx="756.7" cy="538.3" r="3.55" fill="#cf3e1d"/>
<circle cx="772.0" cy="509.5" r="3.55" fill="#cf3e1d"/>
<circle cx="789.3" cy="538.6" r="3.55" fill="#cf3e1d"/>
<circle cx="745.0" cy="512.2" r="3.55" fill="#cf3e1d"/>
<circle cx="787.0" cy="531.0" r="3.55" fill="#cf3e1d"/>
<circle cx="773.3" cy="510.6" r="3.55" fill="#cf3e1d"/>
<circle cx="773.4" cy="506.8" r="3.55" fill="#cf3e1d"/>
<circle cx="733.5" cy="521.9" r="3.55" fill="#cf3e1d"/>
<circle cx="731.8" cy="518.4" r="3.55" fill="#cf3e1d"/>
<circle cx="768.3" cy="524.4" r="3.55" fill="#cf3e1d"/>
<circle cx="781.8" cy="533.8" r="3.55" fill="#cf3e1d"/>
<circle cx="780.5" cy="531.0" r="3.55" fill="#cf3e1d"/>
<circle cx="783.9" cy="545.8" r="3.55" fill="#cf3e1d"/>
<circle cx="741.3" cy="540.7" r="3.55" fill="#cf3e1d"/>
<circle cx="766.4" cy="543.6" r="3.55" fill="#cf3e1d"/>
<circle cx="725.1" cy="521.9" r="3.55" fill="#cf3e1d"/>
<circle cx="770.6" cy="549.5" r="3.55" fill="#cf3e1d"/>
<circle cx="760.7" cy="508.8" r="3.55" fill="#cf3e1d"/>
<circle cx="756.6" cy="542.5" r="3.55" fill="#cf3e1d"/>
<circle cx="766.0" cy="516.2" r="3.55" fill="#cf3e1d"/>
<circle cx="730.3" cy="525.4" r="3.55" fill="#cf3e1d"/>
<circle cx="778.0" cy="531.9" r="3.55" fill="#cf3e1d"/>
<circle cx="729.7" cy="530.6" r="3.55" fill="#cf3e1d"/>
<circle cx="737.5" cy="537.0" r="3.55" fill="#cf3e1d"/>
<circle cx="744.2" cy="510.9" r="3.55" fill="#cf3e1d"/>
<circle cx="780.8" cy="529.8" r="3.55" fill="#cf3e1d"/>
<circle cx="767.0" cy="542.8" r="3.55" fill="#cf3e1d"/>
<circle cx="786.2" cy="504.7" r="3.55" fill="#cf3e1d"/>
<circle cx="741.3" cy="511.2" r="3.55" fill="#cf3e1d"/>
<circle cx="753.1" cy="545.9" r="3.55" fill="#cf3e1d"/>
<circle cx="766.3" cy="522.8" r="3.55" fill="#cf3e1d"/>
<circle cx="751.2" cy="511.6" r="3.55" fill="#cf3e1d"/>
<circle cx="778.5" cy="522.9" r="3.55" fill="#cf3e1d"/>
<circle cx="780.6" cy="533.3" r="3.55" fill="#cf3e1d"/>
<circle cx="721.6" cy="519.8" r="3.55" fill="#cf3e1d"/>
<circle cx="728.6" cy="521.3" r="3.55" fill="#cf3e1d"/>
<circle cx="750.6" cy="531.7" r="3.55" fill="#cf3e1d"/>
<circle cx="744.7" cy="521.0" r="3.55" fill="#cf3e1d"/>
<circle cx="719.4" cy="511.0" r="3.55" fill="#cf3e1d"/>
<circle cx="765.7" cy="517.1" r="3.55" fill="#cf3e1d"/>
<circle cx="736.2" cy="528.0" r="3.55" fill="#cf3e1d"/>
<circle cx="735.4" cy="531.3" r="3.55" fill="#cf3e1d"/>
<circle cx="789.4" cy="505.6" r="3.55" fill="#cf3e1d"/>
<circle cx="757.5" cy="541.0" r="3.55" fill="#cf3e1d"/>
<circle cx="780.6" cy="541.2" r="3.55" fill="#cf3e1d"/>
<circle cx="762.8" cy="534.5" r="3.55" fill="#cf3e1d"/>
<circle cx="742.9" cy="517.5" r="3.55" fill="#cf3e1d"/>
<circle cx="774.9" cy="545.9" r="3.55" fill="#cf3e1d"/>
<circle cx="785.5" cy="536.7" r="3.55" fill="#cf3e1d"/>
<circle cx="738.5" cy="540.6" r="3.55" fill="#cf3e1d"/>
<circle cx="770.7" cy="528.4" r="3.55" fill="#cf3e1d"/>
<circle cx="763.0" cy="520.8" r="3.55" fill="#cf3e1d"/>
<circle cx="756.8" cy="523.5" r="3.55" fill="#cf3e1d"/>
<circle cx="720.5" cy="520.2" r="3.55" fill="#cf3e1d"/>
<circle cx="751.6" cy="521.6" r="3.55" fill="#cf3e1d"/>
<circle cx="734.0" cy="515.3" r="3.55" fill="#cf3e1d"/>
<circle cx="741.8" cy="510.5" r="3.55" fill="#cf3e1d"/>
<circle cx="749.5" cy="525.4" r="3.55" fill="#cf3e1d"/>
<circle cx="758.1" cy="518.5" r="3.55" fill="#cf3e1d"/>
<circle cx="728.5" cy="507.2" r="3.55" fill="#cf3e1d"/>
<circle cx="738.3" cy="518.8" r="3.55" fill="#cf3e1d"/>
<circle cx="769.8" cy="530.5" r="3.55" fill="#cf3e1d"/>
<circle cx="785.4" cy="520.3" r="3.55" fill="#cf3e1d"/>
<circle cx="784.2" cy="532.0" r="3.55" fill="#cf3e1d"/>
<circle cx="721.9" cy="512.6" r="3.55" fill="#cf3e1d"/>
<circle cx="742.4" cy="541.2" r="3.55" fill="#cf3e1d"/>
<circle cx="747.7" cy="545.7" r="3.55" fill="#cf3e1d"/>
<circle cx="721.0" cy="527.3" r="3.55" fill="#cf3e1d"/>
<circle cx="782.5" cy="517.2" r="3.55" fill="#cf3e1d"/>
<circle cx="728.2" cy="516.9" r="3.55" fill="#cf3e1d"/>
<circle cx="768.1" cy="514.5" r="3.55" fill="#cf3e1d"/>
<circle cx="745.6" cy="513.6" r="3.55" fill="#cf3e1d"/>
<circle cx="760.6" cy="545.5" r="3.55" fill="#cf3e1d"/>
<circle cx="764.0" cy="513.4" r="3.55" fill="#cf3e1d"/>
<circle cx="775.9" cy="546.0" r="3.55" fill="#cf3e1d"/>
<circle cx="741.2" cy="510.6" r="3.55" fill="#cf3e1d"/>
<circle cx="729.9" cy="529.8" r="3.55" fill="#cf3e1d"/>
<circle cx="780.8" cy="534.7" r="3.55" fill="#cf3e1d"/>
<circle cx="784.3" cy="514.2" r="3.55" fill="#cf3e1d"/>
<circle cx="740.2" cy="540.0" r="3.55" fill="#cf3e1d"/>
<circle cx="764.0" cy="523.5" r="3.55" fill="#cf3e1d"/>
<circle cx="766.2" cy="520.2" r="3.55" fill="#cf3e1d"/>
<circle cx="720.3" cy="523.9" r="3.55" fill="#cf3e1d"/>
<circle cx="740.8" cy="527.7" r="3.55" fill="#cf3e1d"/>
<circle cx="760.2" cy="516.3" r="3.55" fill="#cf3e1d"/>
<circle cx="784.5" cy="531.1" r="3.55" fill="#cf3e1d"/>
<circle cx="789.1" cy="506.7" r="3.55" fill="#cf3e1d"/>
<circle cx="761.4" cy="538.8" r="3.55" fill="#cf3e1d"/>
<circle cx="740.4" cy="508.5" r="3.55" fill="#cf3e1d"/>
<circle cx="727.6" cy="510.8" r="3.55" fill="#cf3e1d"/>
<circle cx="772.8" cy="508.3" r="3.55" fill="#cf3e1d"/>
<circle cx="776.2" cy="524.3" r="3.55" fill="#cf3e1d"/>
<circle cx="755.9" cy="532.2" r="3.55" fill="#cf3e1d"/>
<circle cx="757.1" cy="535.6" r="3.55" fill="#cf3e1d"/>
<circle cx="760.5" cy="519.9" r="3.55" fill="#cf3e1d"/>
<circle cx="770.8" cy="516.4" r="3.55" fill="#cf3e1d"/>
<circle cx="768.6" cy="540.6" r="3.55" fill="#cf3e1d"/>
<circle cx="773.4" cy="518.8" r="3.55" fill="#cf3e1d"/>
<circle cx="749.5" cy="517.4" r="3.55" fill="#cf3e1d"/>
<circle cx="751.2" cy="535.5" r="3.55" fill="#cf3e1d"/>
<circle cx="773.3" cy="521.4" r="3.55" fill="#cf3e1d"/>
<circle cx="789.2" cy="515.0" r="3.55" fill="#cf3e1d"/>
<circle cx="772.0" cy="508.3" r="3.55" fill="#cf3e1d"/>
<circle cx="718.1" cy="510.4" r="3.55" fill="#cf3e1d"/>
<circle cx="720.5" cy="528.1" r="3.55" fill="#cf3e1d"/>
<circle cx="757.1" cy="512.7" r="3.55" fill="#cf3e1d"/>
<circle cx="785.5" cy="521.5" r="3.55" fill="#cf3e1d"/>
<circle cx="727.0" cy="512.5" r="3.55" fill="#cf3e1d"/>
<circle cx="770.6" cy="548.2" r="3.55" fill="#cf3e1d"/>
<circle cx="773.6" cy="515.6" r="3.55" fill="#cf3e1d"/>
<circle cx="788.7" cy="527.9" r="3.55" fill="#cf3e1d"/>
<circle cx="763.1" cy="520.5" r="3.55" fill="#cf3e1d"/>
<circle cx="775.2" cy="526.1" r="3.55" fill="#cf3e1d"/>
<circle cx="785.9" cy="534.1" r="3.55" fill="#cf3e1d"/>
<circle cx="732.6" cy="516.1" r="3.55" fill="#cf3e1d"/>
<circle cx="735.4" cy="524.8" r="3.55" fill="#cf3e1d"/>
<circle cx="733.1" cy="513.8" r="3.55" fill="#cf3e1d"/>
<circle cx="772.2" cy="534.9" r="3.55" fill="#cf3e1d"/>
<circle cx="732.0" cy="531.3" r="3.55" fill="#cf3e1d"/>
<circle cx="780.3" cy="516.8" r="3.55" fill="#cf3e1d"/>
<circle cx="771.6" cy="543.5" r="3.55" fill="#cf3e1d"/>
<circle cx="736.9" cy="519.9" r="3.55" fill="#cf3e1d"/>
<circle cx="760.2" cy="525.7" r="3.55" fill="#cf3e1d"/>
<circle cx="758.9" cy="546.4" r="3.55" fill="#cf3e1d"/>
<circle cx="742.7" cy="541.4" r="3.55" fill="#cf3e1d"/>
<circle cx="779.9" cy="512.8" r="3.55" fill="#cf3e1d"/>
<circle cx="723.2" cy="512.1" r="3.55" fill="#cf3e1d"/>
<circle cx="766.5" cy="508.3" r="3.55" fill="#cf3e1d"/>
<circle cx="769.0" cy="546.3" r="3.55" fill="#cf3e1d"/>
<circle cx="788.5" cy="505.6" r="3.55" fill="#cf3e1d"/>
<circle cx="753.4" cy="515.1" r="3.55" fill="#cf3e1d"/>
<circle cx="747.9" cy="509.0" r="3.55" fill="#cf3e1d"/>
<circle cx="724.9" cy="527.4" r="3.55" fill="#cf3e1d"/>
<circle cx="726.0" cy="524.6" r="3.55" fill="#cf3e1d"/>
<circle cx="753.1" cy="509.4" r="3.55" fill="#cf3e1d"/>
<circle cx="742.2" cy="527.8" r="3.55" fill="#cf3e1d"/>
<circle cx="784.0" cy="520.8" r="3.55" fill="#cf3e1d"/>
<circle cx="781.4" cy="539.1" r="3.55" fill="#cf3e1d"/>
<circle cx="736.2" cy="512.5" r="3.55" fill="#cf3e1d"/>
<circle cx="746.2" cy="530.7" r="3.55" fill="#cf3e1d"/>
<circle cx="766.9" cy="535.3" r="3.55" fill="#cf3e1d"/>
<circle cx="756.3" cy="530.3" r="3.55" fill="#cf3e1d"/>
<circle cx="780.7" cy="538.5" r="3.55" fill="#cf3e1d"/>
<circle cx="745.5" cy="519.3" r="3.55" fill="#cf3e1d"/>
<circle cx="744.6" cy="522.5" r="3.55" fill="#cf3e1d"/>
<circle cx="746.3" cy="510.9" r="3.55" fill="#cf3e1d"/>
<circle cx="789.9" cy="504.3" r="3.55" fill="#cf3e1d"/>
<circle cx="734.8" cy="533.3" r="3.55" fill="#cf3e1d"/>
<circle cx="743.9" cy="515.6" r="3.55" fill="#cf3e1d"/>
<circle cx="730.7" cy="509.6" r="3.55" fill="#cf3e1d"/>
<circle cx="778.4" cy="541.6" r="3.55" fill="#cf3e1d"/>
<circle cx="783.2" cy="506.4" r="3.55" fill="#cf3e1d"/>
<circle cx="767.4" cy="519.6" r="3.55" fill="#cf3e1d"/>
<circle cx="763.8" cy="530.3" r="3.55" fill="#cf3e1d"/>
<circle cx="779.2" cy="528.5" r="3.55" fill="#cf3e1d"/>
<circle cx="733.3" cy="534.2" r="3.55" fill="#cf3e1d"/>
<circle cx="771.0" cy="522.2" r="3.55" fill="#cf3e1d"/>
<circle cx="768.7" cy="522.9" r="3.55" fill="#cf3e1d"/>
<circle cx="754.9" cy="533.4" r="3.55" fill="#cf3e1d"/>
<circle cx="766.1" cy="519.5" r="3.55" fill="#cf3e1d"/>
<circle cx="762.5" cy="530.1" r="3.55" fill="#cf3e1d"/>
<circle cx="732.5" cy="533.4" r="3.55" fill="#cf3e1d"/>
<circle cx="751.0" cy="538.6" r="3.55" fill="#cf3e1d"/>
<circle cx="754.6" cy="526.9" r="3.55" fill="#cf3e1d"/>
<circle cx="732.4" cy="510.8" r="3.55" fill="#cf3e1d"/>
<circle cx="784.6" cy="529.4" r="3.55" fill="#cf3e1d"/>
<circle cx="754.8" cy="529.3" r="3.55" fill="#cf3e1d"/>
<circle cx="776.2" cy="515.5" r="3.55" fill="#cf3e1d"/>
<circle cx="750.1" cy="534.7" r="3.55" fill="#cf3e1d"/>
<circle cx="777.2" cy="546.9" r="3.55" fill="#cf3e1d"/>
<circle cx="780.2" cy="506.1" r="3.55" fill="#cf3e1d"/>
<circle cx="776.5" cy="509.9" r="3.55" fill="#cf3e1d"/>
<circle cx="727.4" cy="516.1" r="3.55" fill="#cf3e1d"/>
<circle cx="723.6" cy="521.1" r="3.55" fill="#cf3e1d"/>
<circle cx="775.4" cy="529.0" r="3.55" fill="#cf3e1d"/>
<circle cx="749.5" cy="508.2" r="3.55" fill="#cf3e1d"/>
<circle cx="767.4" cy="525.6" r="3.55" fill="#cf3e1d"/>
<circle cx="751.4" cy="542.3" r="3.55" fill="#cf3e1d"/>
<circle cx="772.2" cy="511.2" r="3.55" fill="#cf3e1d"/>
<circle cx="766.3" cy="521.6" r="3.55" fill="#cf3e1d"/>
<circle cx="754.5" cy="515.4" r="3.55" fill="#cf3e1d"/>
<circle cx="743.4" cy="520.3" r="3.55" fill="#cf3e1d"/>
<circle cx="730.9" cy="531.4" r="3.55" fill="#cf3e1d"/>
<circle cx="720.3" cy="512.6" r="3.55" fill="#cf3e1d"/>
<circle cx="769.1" cy="517.2" r="3.55" fill="#cf3e1d"/>
<circle cx="740.0" cy="515.6" r="3.55" fill="#cf3e1d"/>
<circle cx="777.7" cy="508.4" r="3.55" fill="#cf3e1d"/>
<circle cx="763.1" cy="545.2" r="3.55" fill="#cf3e1d"/>
<circle cx="730.9" cy="524.3" r="3.55" fill="#cf3e1d"/>
<circle cx="774.6" cy="533.7" r="3.55" fill="#cf3e1d"/>
<circle cx="748.7" cy="521.6" r="3.55" fill="#cf3e1d"/>
<circle cx="768.7" cy="518.2" r="3.55" fill="#cf3e1d"/>
<circle cx="746.2" cy="535.1" r="3.55" fill="#cf3e1d"/>
<circle cx="776.0" cy="520.9" r="3.55" fill="#cf3e1d"/>
<circle cx="744.5" cy="531.8" r="3.55" fill="#cf3e1d"/>
<circle cx="784.4" cy="513.2" r="3.55" fill="#cf3e1d"/>
<circle cx="787.9" cy="538.2" r="3.55" fill="#cf3e1d"/>
<circle cx="743.6" cy="535.9" r="3.55" fill="#cf3e1d"/>
<circle cx="771.9" cy="522.2" r="3.55" fill="#cf3e1d"/>
<circle cx="754.9" cy="527.8" r="3.55" fill="#cf3e1d"/>
<circle cx="782.7" cy="540.3" r="3.55" fill="#cf3e1d"/>
<circle cx="750.2" cy="526.2" r="3.55" fill="#cf3e1d"/>
<circle cx="778.1" cy="523.9" r="3.55" fill="#cf3e1d"/>
<circle cx="748.5" cy="527.6" r="3.55" fill="#cf3e1d"/>
<circle cx="753.9" cy="543.6" r="3.55" fill="#cf3e1d"/>
<circle cx="765.6" cy="539.5" r="3.55" fill="#cf3e1d"/>
<circle cx="766.3" cy="530.6" r="3.55" fill="#cf3e1d"/>
<circle cx="772.9" cy="541.0" r="3.55" fill="#cf3e1d"/>
<circle cx="724.7" cy="514.6" r="3.55" fill="#cf3e1d"/>
<circle cx="723.5" cy="508.2" r="3.55" fill="#cf3e1d"/>
<circle cx="771.7" cy="531.1" r="3.55" fill="#cf3e1d"/>
<circle cx="768.6" cy="527.2" r="3.55" fill="#cf3e1d"/>
<circle cx="746.9" cy="532.0" r="3.55" fill="#cf3e1d"/>
<circle cx="789.9" cy="543.2" r="3.55" fill="#cf3e1d"/>
<circle cx="780.5" cy="511.0" r="3.55" fill="#cf3e1d"/>
<circle cx="740.7" cy="528.9" r="3.55" fill="#cf3e1d"/>
<circle cx="736.3" cy="516.6" r="3.55" fill="#cf3e1d"/>
<circle cx="739.2" cy="516.2" r="3.55" fill="#cf3e1d"/>
<circle cx="779.6" cy="530.7" r="3.55" fill="#cf3e1d"/>
<circle cx="753.8" cy="524.2" r="3.55" fill="#cf3e1d"/>
<circle cx="719.8" cy="518.6" r="3.55" fill="#cf3e1d"/>
<circle cx="780.1" cy="542.5" r="3.55" fill="#cf3e1d"/>
<circle cx="779.4" cy="516.3" r="3.55" fill="#cf3e1d"/>
<circle cx="755.7" cy="521.9" r="3.55" fill="#cf3e1d"/>
<circle cx="750.4" cy="527.5" r="3.55" fill="#cf3e1d"/>
<circle cx="759.2" cy="521.6" r="3.55" fill="#cf3e1d"/>
<circle cx="775.3" cy="513.6" r="3.55" fill="#cf3e1d"/>
<circle cx="784.0" cy="530.7" r="3.55" fill="#cf3e1d"/>
<circle cx="719.8" cy="519.1" r="3.55" fill="#cf3e1d"/>
<circle cx="755.4" cy="523.6" r="3.55" fill="#cf3e1d"/>
<circle cx="757.8" cy="519.5" r="3.55" fill="#cf3e1d"/>
<circle cx="737.6" cy="538.1" r="3.55" fill="#cf3e1d"/>
<circle cx="775.4" cy="532.4" r="3.55" fill="#cf3e1d"/>
<circle cx="748.9" cy="546.1" r="3.55" fill="#cf3e1d"/>
<circle cx="720.3" cy="524.8" r="3.55" fill="#cf3e1d"/>
<circle cx="779.8" cy="507.5" r="3.55" fill="#cf3e1d"/>
<circle cx="760.1" cy="512.6" r="3.55" fill="#cf3e1d"/>
<circle cx="784.3" cy="530.9" r="3.55" fill="#cf3e1d"/>
<circle cx="775.3" cy="527.9" r="3.55" fill="#cf3e1d"/>
<circle cx="765.9" cy="536.4" r="3.55" fill="#cf3e1d"/>
<circle cx="737.8" cy="514.1" r="3.55" fill="#cf3e1d"/>
<circle cx="778.0" cy="511.0" r="3.55" fill="#cf3e1d"/>
<circle cx="783.9" cy="513.9" r="3.55" fill="#cf3e1d"/>
<circle cx="723.5" cy="508.6" r="3.55" fill="#cf3e1d"/>
<circle cx="774.0" cy="549.6" r="3.55" fill="#cf3e1d"/>
<circle cx="746.7" cy="535.6" r="3.55" fill="#cf3e1d"/>
<circle cx="766.8" cy="511.4" r="3.55" fill="#cf3e1d"/>
<circle cx="737.7" cy="515.2" r="3.55" fill="#cf3e1d"/>
<circle cx="759.1" cy="519.3" r="3.55" fill="#cf3e1d"/>
<circle cx="757.5" cy="511.4" r="3.55" fill="#cf3e1d"/>
<circle cx="783.5" cy="519.6" r="3.55" fill="#cf3e1d"/>
<circle cx="778.3" cy="511.3" r="3.55" fill="#cf3e1d"/>
<circle cx="744.1" cy="534.8" r="3.55" fill="#cf3e1d"/>
<circle cx="732.5" cy="530.2" r="3.55" fill="#cf3e1d"/>
<circle cx="722.9" cy="526.3" r="3.55" fill="#cf3e1d"/>
<circle cx="769.9" cy="524.6" r="3.55" fill="#cf3e1d"/>
<circle cx="766.2" cy="509.5" r="3.55" fill="#cf3e1d"/>
<circle cx="777.3" cy="509.9" r="3.55" fill="#cf3e1d"/>
<circle cx="785.5" cy="529.3" r="3.55" fill="#cf3e1d"/>
<circle cx="737.5" cy="520.7" r="3.55" fill="#cf3e1d"/>
<circle cx="771.5" cy="527.8" r="3.55" fill="#cf3e1d"/>
<circle cx="784.8" cy="508.5" r="3.55" fill="#cf3e1d"/>
<circle cx="751.9" cy="545.5" r="3.55" fill="#cf3e1d"/>
<circle cx="760.2" cy="530.0" r="3.55" fill="#cf3e1d"/>
<circle cx="722.5" cy="510.7" r="3.55" fill="#cf3e1d"/>
<circle cx="778.6" cy="514.9" r="3.55" fill="#cf3e1d"/>
<circle cx="784.4" cy="505.6" r="3.55" fill="#cf3e1d"/>
<circle cx="740.7" cy="525.6" r="3.55" fill="#cf3e1d"/>
<circle cx="757.4" cy="508.6" r="3.55" fill="#cf3e1d"/>
<circle cx="756.8" cy="541.8" r="3.55" fill="#cf3e1d"/>
<circle cx="760.1" cy="526.1" r="3.55" fill="#cf3e1d"/>
<circle cx="725.8" cy="531.7" r="3.55" fill="#cf3e1d"/>
<circle cx="742.1" cy="522.0" r="3.55" fill="#cf3e1d"/>
<circle cx="765.1" cy="511.9" r="3.55" fill="#cf3e1d"/>
<circle cx="780.6" cy="527.1" r="3.55" fill="#cf3e1d"/>
<circle cx="727.0" cy="508.5" r="3.55" fill="#cf3e1d"/>
<circle cx="781.1" cy="509.6" r="3.55" fill="#cf3e1d"/>
<circle cx="752.7" cy="529.7" r="3.55" fill="#cf3e1d"/>
<circle cx="724.7" cy="526.5" r="3.55" fill="#cf3e1d"/>
<circle cx="728.1" cy="529.7" r="3.55" fill="#cf3e1d"/>
<circle cx="753.5" cy="521.6" r="3.55" fill="#cf3e1d"/>
<circle cx="730.6" cy="523.4" r="3.55" fill="#cf3e1d"/>
<circle cx="731.1" cy="510.1" r="3.55" fill="#cf3e1d"/>
<circle cx="753.1" cy="546.7" r="3.55" fill="#cf3e1d"/>
<circle cx="752.1" cy="542.0" r="3.55" fill="#cf3e1d"/>
<circle cx="758.2" cy="537.1" r="3.55" fill="#cf3e1d"/>
<circle cx="727.4" cy="516.7" r="3.55" fill="#cf3e1d"/>
<circle cx="718.3" cy="522.9" r="3.55" fill="#cf3e1d"/>
<circle cx="754.3" cy="518.0" r="3.55" fill="#cf3e1d"/>
<circle cx="781.9" cy="508.0" r="3.55" fill="#cf3e1d"/>
<circle cx="758.8" cy="515.2" r="3.55" fill="#cf3e1d"/>
<circle cx="760.1" cy="541.6" r="3.55" fill="#cf3e1d"/>
<circle cx="734.2" cy="532.8" r="3.55" fill="#cf3e1d"/>
<circle cx="788.7" cy="506.0" r="3.55" fill="#cf3e1d"/>
<circle cx="761.8" cy="537.2" r="3.55" fill="#cf3e1d"/>
<circle cx="776.3" cy="520.4" r="3.55" fill="#cf3e1d"/>
<circle cx="776.0" cy="526.2" r="3.55" fill="#cf3e1d"/>
<circle cx="785.6" cy="523.8" r="3.55" fill="#cf3e1d"/>
<circle cx="746.1" cy="508.2" r="3.55" fill="#cf3e1d"/>
<circle cx="766.2" cy="511.3" r="3.55" fill="#cf3e1d"/>
<circle cx="741.5" cy="510.7" r="3.55" fill="#cf3e1d"/>
<circle cx="730.7" cy="514.5" r="3.55" fill="#cf3e1d"/>
<circle cx="789.8" cy="542.0" r="3.55" fill="#cf3e1d"/>
<circle cx="751.5" cy="527.9" r="3.55" fill="#cf3e1d"/>
<circle cx="773.7" cy="547.6" r="3.55" fill="#cf3e1d"/>
<circle cx="771.6" cy="534.5" r="3.55" fill="#cf3e1d"/>
<circle cx="730.7" cy="534.0" r="3.55" fill="#cf3e1d"/>
<circle cx="778.6" cy="541.8" r="3.55" fill="#cf3e1d"/>
<circle cx="741.8" cy="511.8" r="3.55" fill="#cf3e1d"/>
<circle cx="787.5" cy="536.3" r="3.55" fill="#cf3e1d"/>
<circle cx="771.2" cy="510.5" r="3.55" fill="#cf3e1d"/>
<circle cx="777.3" cy="549.0" r="3.55" fill="#cf3e1d"/>
<circle cx="783.0" cy="539.8" r="3.55" fill="#cf3e1d"/>
<circle cx="777.6" cy="542.5" r="3.55" fill="#cf3e1d"/>
<circle cx="759.7" cy="524.9" r="3.55" fill="#cf3e1d"/>
<circle cx="777.1" cy="541.7" r="3.55" fill="#cf3e1d"/>
<circle cx="780.4" cy="518.4" r="3.55" fill="#cf3e1d"/>
<circle cx="787.1" cy="529.5" r="3.55" fill="#cf3e1d"/>
<circle cx="786.0" cy="509.6" r="3.55" fill="#cf3e1d"/>
<circle cx="787.7" cy="541.8" r="3.55" fill="#cf3e1d"/>
<circle cx="733.2" cy="513.5" r="3.55" fill="#cf3e1d"/>
<circle cx="749.9" cy="515.4" r="3.55" fill="#cf3e1d"/>
<circle cx="766.7" cy="538.1" r="3.55" fill="#cf3e1d"/>
<circle cx="745.0" cy="541.6" r="3.55" fill="#cf3e1d"/>
<circle cx="774.7" cy="536.8" r="3.55" fill="#cf3e1d"/>
<circle cx="785.7" cy="543.6" r="3.55" fill="#cf3e1d"/>
<circle cx="746.1" cy="508.2" r="3.55" fill="#cf3e1d"/>
<circle cx="764.3" cy="544.1" r="3.55" fill="#cf3e1d"/>
<circle cx="741.1" cy="532.6" r="3.55" fill="#cf3e1d"/>
<circle cx="777.9" cy="542.1" r="3.55" fill="#cf3e1d"/>
<circle cx="717.2" cy="509.3" r="3.55" fill="#cf3e1d"/>
<circle cx="776.1" cy="524.1" r="3.55" fill="#cf3e1d"/>
<circle cx="760.8" cy="526.0" r="3.55" fill="#cf3e1d"/>
<circle cx="740.8" cy="514.3" r="3.55" fill="#cf3e1d"/>
<circle cx="761.8" cy="518.0" r="3.55" fill="#cf3e1d"/>
<circle cx="722.5" cy="517.0" r="3.55" fill="#cf3e1d"/>
<circle cx="767.9" cy="525.2" r="3.55" fill="#cf3e1d"/>
<circle cx="764.9" cy="542.7" r="3.55" fill="#cf3e1d"/>
<circle cx="729.6" cy="517.0" r="3.55" fill="#cf3e1d"/>
<circle cx="786.9" cy="521.4" r="3.55" fill="#cf3e1d"/>
<circle cx="761.2" cy="546.9" r="3.55" fill="#cf3e1d"/>
<circle cx="745.2" cy="528.0" r="3.55" fill="#cf3e1d"/>
<circle cx="786.7" cy="528.3" r="3.55" fill="#cf3e1d"/>
<circle cx="789.2" cy="513.1" r="3.55" fill="#cf3e1d"/>
<circle cx="777.5" cy="511.8" r="3.55" fill="#cf3e1d"/>
<circle cx="749.6" cy="542.9" r="3.55" fill="#cf3e1d"/>
<circle cx="734.6" cy="520.9" r="3.55" fill="#cf3e1d"/>
<circle cx="723.5" cy="530.5" r="3.55" fill="#cf3e1d"/>
<circle cx="779.8" cy="528.7" r="3.55" fill="#cf3e1d"/>
<circle cx="782.1" cy="536.0" r="3.55" fill="#cf3e1d"/>
<circle cx="742.8" cy="535.7" r="3.55" fill="#cf3e1d"/>
<circle cx="762.8" cy="522.0" r="3.55" fill="#cf3e1d"/>
<circle cx="754.6" cy="536.5" r="3.55" fill="#cf3e1d"/>
<circle cx="783.1" cy="527.9" r="3.55" fill="#cf3e1d"/>
<circle cx="766.6" cy="530.8" r="3.55" fill="#cf3e1d"/>
<circle cx="749.1" cy="540.1" r="3.55" fill="#cf3e1d"/>
<circle cx="781.9" cy="539.0" r="3.55" fill="#cf3e1d"/>
<circle cx="740.1" cy="510.6" r="3.55" fill="#cf3e1d"/>
<circle cx="786.5" cy="546.8" r="3.55" fill="#cf3e1d"/>
<circle cx="726.7" cy="532.2" r="3.55" fill="#cf3e1d"/>
<circle cx="745.0" cy="539.9" r="3.55" fill="#cf3e1d"/>
<circle cx="763.5" cy="517.5" r="3.55" fill="#cf3e1d"/>
<circle cx="772.4" cy="518.0" r="3.55" fill="#cf3e1d"/>
<circle cx="756.3" cy="524.2" r="3.55" fill="#cf3e1d"/>
<circle cx="788.4" cy="535.1" r="3.55" fill="#cf3e1d"/>
<circle cx="775.6" cy="536.5" r="3.55" fill="#cf3e1d"/>
<circle cx="768.5" cy="537.2" r="3.55" fill="#cf3e1d"/>
<circle cx="736.5" cy="511.8" r="3.55" fill="#cf3e1d"/>
<circle cx="758.6" cy="543.6" r="3.55" fill="#cf3e1d"/>
<circle cx="774.7" cy="520.7" r="3.55" fill="#cf3e1d"/>
<circle cx="726.4" cy="528.8" r="3.55" fill="#cf3e1d"/>
<circle cx="780.9" cy="511.8" r="3.55" fill="#cf3e1d"/>
<circle cx="770.6" cy="512.2" r="3.55" fill="#cf3e1d"/>
<circle cx="738.0" cy="522.4" r="3.55" fill="#cf3e1d"/>
<circle cx="787.6" cy="550.2" r="3.55" fill="#cf3e1d"/>
<circle cx="729.8" cy="518.9" r="3.55" fill="#cf3e1d"/>
<circle cx="785.8" cy="513.5" r="3.55" fill="#cf3e1d"/>
<circle cx="739.7" cy="525.0" r="3.55" fill="#cf3e1d"/>
<circle cx="724.0" cy="516.5" r="3.55" fill="#cf3e1d"/>
<circle cx="745.2" cy="522.5" r="3.55" fill="#cf3e1d"/>
<circle cx="787.3" cy="516.8" r="3.55" fill="#cf3e1d"/>
<circle cx="749.3" cy="544.2" r="3.55" fill="#cf3e1d"/>
<circle cx="763.1" cy="541.4" r="3.55" fill="#cf3e1d"/>
<circle cx="739.3" cy="511.3" r="3.55" fill="#cf3e1d"/>
<circle cx="772.0" cy="526.6" r="3.55" fill="#cf3e1d"/>
<circle cx="757.3" cy="536.2" r="3.55" fill="#cf3e1d"/>
<circle cx="771.7" cy="517.2" r="3.55" fill="#cf3e1d"/>
<circle cx="755.2" cy="517.8" r="3.55" fill="#cf3e1d"/>
<circle cx="762.6" cy="516.5" r="3.55" fill="#cf3e1d"/>
<circle cx="777.2" cy="531.2" r="3.55" fill="#cf3e1d"/>
<circle cx="735.6" cy="515.7" r="3.55" fill="#cf3e1d"/>
<circle cx="771.8" cy="536.5" r="3.55" fill="#cf3e1d"/>
<circle cx="746.5" cy="542.8" r="3.55" fill="#cf3e1d"/>
<circle cx="724.2" cy="518.7" r="3.55" fill="#cf3e1d"/>
<circle cx="746.0" cy="520.0" r="3.55" fill="#2aa9d8"/>
<circle cx="752.0" cy="523.0" r="3.55" fill="#2aa9d8"/>
<circle cx="744.0" cy="508.0" r="3.55" fill="#2aa9d8"/>
<circle cx="770.0" cy="535.0" r="3.55" fill="#2aa9d8"/>
<circle cx="738.0" cy="525.0" r="3.55" fill="#2aa9d8"/>
<circle cx="764.0" cy="516.0" r="3.55" fill="#2aa9d8"/>
<circle cx="724.0" cy="505.0" r="3.55" fill="#2aa9d8"/>
<circle cx="728.0" cy="512.0" r="3.55" fill="#2aa9d8"/>
<circle cx="766.0" cy="544.3" r="3.55" fill="#2aa9d8"/>
<circle cx="768.2" cy="543.2" r="3.55" fill="#2aa9d8"/>
<circle cx="787.3" cy="539.9" r="3.55" fill="#2aa9d8"/>
<circle cx="745.2" cy="536.8" r="3.55" fill="#2aa9d8"/>
<circle cx="730.7" cy="531.5" r="3.55" fill="#2aa9d8"/>
<circle cx="754.0" cy="544.3" r="3.55" fill="#2aa9d8"/>
<circle cx="723.1" cy="525.2" r="3.55" fill="#2aa9d8"/>
<circle cx="744.3" cy="541.4" r="3.55" fill="#2aa9d8"/>
<circle cx="764.7" cy="542.9" r="3.55" fill="#2aa9d8"/>
<circle cx="754.9" cy="544.7" r="3.55" fill="#2aa9d8"/>
<circle cx="776.2" cy="541.3" r="3.55" fill="#2aa9d8"/>
<circle cx="766.4" cy="543.7" r="3.55" fill="#2aa9d8"/>
<circle cx="785.3" cy="543.9" r="3.55" fill="#2aa9d8"/>
<circle cx="777.2" cy="546.5" r="3.55" fill="#2aa9d8"/>
<circle cx="725.9" cy="530.1" r="3.55" fill="#2aa9d8"/>
<circle cx="758.0" cy="539.2" r="3.55" fill="#2aa9d8"/>
<circle cx="759.2" cy="554.6" r="3.55" fill="#4570d8"/>
<circle cx="726.5" cy="540.3" r="3.55" fill="#4570d8"/>
<circle cx="766.2" cy="557.8" r="3.55" fill="#4570d8"/>
<circle cx="739.7" cy="546.7" r="3.55" fill="#4570d8"/>
<circle cx="775.7" cy="551.7" r="3.55" fill="#4570d8"/>
<circle cx="757.3" cy="554.7" r="3.55" fill="#4570d8"/>
<circle cx="717.5" cy="535.4" r="3.55" fill="#4570d8"/>
<circle cx="771.5" cy="557.1" r="3.55" fill="#4570d8"/>
<circle cx="719.6" cy="538.5" r="3.55" fill="#4570d8"/>
<circle cx="736.0" cy="548.9" r="3.55" fill="#4570d8"/>
<circle cx="730.2" cy="541.2" r="3.55" fill="#4570d8"/>
<circle cx="778.7" cy="554.9" r="3.55" fill="#4570d8"/>
<circle cx="717.7" cy="530.8" r="3.55" fill="#4570d8"/>
<circle cx="748.9" cy="552.0" r="3.55" fill="#4570d8"/>
<circle cx="760.8" cy="556.5" r="3.55" fill="#4570d8"/>
<circle cx="741.6" cy="551.3" r="3.55" fill="#4570d8"/>
<circle cx="731.3" cy="546.4" r="3.55" fill="#4570d8"/>
<circle cx="776.7" cy="554.2" r="3.55" fill="#4570d8"/>
<circle cx="786.3" cy="552.1" r="3.55" fill="#4570d8"/>
<circle cx="722.4" cy="540.1" r="3.55" fill="#4570d8"/>
<circle cx="765.8" cy="555.1" r="3.55" fill="#4570d8"/>
<circle cx="726.0" cy="540.4" r="3.55" fill="#4570d8"/>
<circle cx="696.5" cy="487.9" r="3.55" fill="#2aa9d8"/>
<circle cx="697.2" cy="498.8" r="3.55" fill="#2aa9d8"/>
<circle cx="693.7" cy="488.2" r="3.55" fill="#2aa9d8"/>
<circle cx="707.7" cy="508.8" r="3.55" fill="#2aa9d8"/>
<circle cx="713.3" cy="517.5" r="3.55" fill="#2aa9d8"/>
<circle cx="702.7" cy="506.2" r="3.55" fill="#2aa9d8"/>
<circle cx="694.4" cy="481.9" r="3.55" fill="#2aa9d8"/>
<circle cx="701.7" cy="503.8" r="3.55" fill="#2aa9d8"/>
<circle cx="695.4" cy="489.5" r="3.55" fill="#2aa9d8"/>
<circle cx="694.2" cy="490.3" r="3.55" fill="#2aa9d8"/>
<circle cx="696.8" cy="504.4" r="3.55" fill="#d24f96"/>
<circle cx="725.0" cy="520.9" r="3.55" fill="#d24f96"/>
<circle cx="741.5" cy="531.6" r="3.55" fill="#d24f96"/>
<circle cx="766.7" cy="540.3" r="3.55" fill="#d24f96"/>
<circle cx="758.0" cy="564.6" r="3.55" fill="#4570d8"/>
<circle cx="763.8" cy="574.3" r="3.55" fill="#4570d8"/>
<circle cx="771.6" cy="576.2" r="3.55" fill="#4570d8"/>
<circle cx="757.0" cy="566.0" r="3.55" fill="#4570d8"/>
<circle cx="763.4" cy="582.7" r="3.55" fill="#4570d8"/>
<circle cx="759.9" cy="582.6" r="3.55" fill="#4570d8"/>
<circle cx="760.7" cy="572.3" r="3.55" fill="#4570d8"/>
<circle cx="774.2" cy="607.4" r="3.55" fill="#4570d8"/>
<circle cx="764.5" cy="583.6" r="3.55" fill="#4570d8"/>
<circle cx="759.1" cy="570.6" r="3.55" fill="#4570d8"/>
<circle cx="758.0" cy="572.0" r="3.55" fill="#4570d8"/>
<circle cx="771.1" cy="605.4" r="3.55" fill="#4570d8"/>
<circle cx="771.2" cy="606.7" r="3.55" fill="#4570d8"/>
<circle cx="763.2" cy="584.1" r="3.55" fill="#4570d8"/>
<circle cx="756.0" cy="569.9" r="3.55" fill="#4570d8"/>
<circle cx="763.4" cy="587.3" r="3.55" fill="#4570d8"/>
<circle cx="769.7" cy="599.7" r="3.55" fill="#4570d8"/>
<circle cx="760.6" cy="568.0" r="3.55" fill="#4570d8"/>
<circle cx="757.4" cy="569.7" r="3.55" fill="#4570d8"/>
<circle cx="769.2" cy="602.8" r="3.55" fill="#4570d8"/>
<circle cx="757.9" cy="577.1" r="3.55" fill="#4570d8"/>
<circle cx="759.0" cy="582.5" r="3.55" fill="#4570d8"/>
<circle cx="757.1" cy="571.1" r="3.55" fill="#4570d8"/>
<circle cx="764.9" cy="591.5" r="3.55" fill="#4570d8"/>
<circle cx="775.2" cy="582.1" r="3.55" fill="#4570d8"/>
<circle cx="769.0" cy="583.0" r="3.55" fill="#4570d8"/>
<circle cx="784.2" cy="577.3" r="3.55" fill="#4570d8"/>
<circle cx="783.5" cy="578.9" r="3.55" fill="#4570d8"/>
<circle cx="773.6" cy="583.5" r="3.55" fill="#4570d8"/>
<circle cx="767.8" cy="586.5" r="3.55" fill="#4570d8"/>
<circle cx="772.4" cy="584.0" r="3.55" fill="#4570d8"/>
<circle cx="787.0" cy="579.0" r="3.55" fill="#4570d8"/>
<circle cx="766.4" cy="586.6" r="3.55" fill="#4570d8"/>
<circle cx="782.9" cy="575.0" r="3.55" fill="#4570d8"/>
<circle cx="775.9" cy="580.5" r="3.55" fill="#4570d8"/>
<circle cx="785.4" cy="579.7" r="3.55" fill="#4570d8"/>
<circle cx="789.0" cy="589.9" r="3.55" fill="#4570d8"/>
<circle cx="787.1" cy="585.1" r="3.55" fill="#4570d8"/>
<circle cx="789.7" cy="603.3" r="3.55" fill="#4570d8"/>
<circle cx="780.2" cy="606.2" r="3.55" fill="#4570d8"/>
<circle cx="780.0" cy="597.4" r="3.55" fill="#4570d8"/>
<circle cx="788.7" cy="609.5" r="3.55" fill="#4570d8"/>
<circle cx="784.7" cy="606.6" r="3.55" fill="#4570d8"/>
<circle cx="784.0" cy="600.6" r="3.55" fill="#4570d8"/>
<circle cx="785.1" cy="606.0" r="3.55" fill="#4570d8"/>
<circle cx="784.5" cy="590.7" r="3.55" fill="#4570d8"/>
<circle cx="788.0" cy="606.3" r="3.55" fill="#4570d8"/>
<circle cx="783.5" cy="585.7" r="3.55" fill="#4570d8"/>
<circle cx="785.8" cy="588.2" r="3.55" fill="#4570d8"/>
<circle cx="783.1" cy="585.3" r="3.55" fill="#4570d8"/>
<circle cx="789.7" cy="598.4" r="3.55" fill="#4570d8"/>
<circle cx="782.2" cy="584.8" r="3.55" fill="#4570d8"/>
<circle cx="775.0" cy="588.0" r="3.55" fill="#2aa9d8"/>
<circle cx="786.0" cy="607.0" r="3.55" fill="#26a69e"/>
</g>
<text x="474" y="178" font-size="12.5" font-weight="bold" fill="#3d3d3d" font-style="normal" letter-spacing="0" stroke="#fff" stroke-width="2.2" stroke-opacity=".75" paint-order="stroke">Indonesia</text>
<text x="476" y="205" font-size="9.5" font-weight="bold" fill="#3d3d3d" font-style="normal" letter-spacing="0" stroke="#fff" stroke-width="2.2" stroke-opacity=".75" paint-order="stroke">Makassar</text>
<circle cx="523.3" cy="201" r="1.5" fill="#fff" stroke="#333" stroke-width="1"/>
<circle cx="460.5" cy="221" r="1.6" fill="#fff" stroke="#444" stroke-width="0.9"/>
<text x="464" y="224.5" font-size="9.5" font-weight="bold" fill="#3d3d3d" font-style="normal" letter-spacing="0" stroke="#fff" stroke-width="2.2" stroke-opacity=".75" paint-order="stroke">Surabaya</text>
<text x="580" y="238" font-size="8.5" font-weight="bold" fill="#3d3d3d" font-style="normal" letter-spacing="0" stroke="#fff" stroke-width="2.2" stroke-opacity=".75" paint-order="stroke">TL</text>
<text x="640" y="260" font-size="9" font-weight="bold" fill="#3d3d3d" font-style="normal" letter-spacing="0" stroke="#fff" stroke-width="2.2" stroke-opacity=".75" paint-order="stroke"></text>
<text x="560" y="209" font-size="10" font-weight="normal" fill="#a8d0ef" font-style="italic" letter-spacing="1.5" >Banda Sea</text>
<text x="640" y="241" font-size="10" font-weight="normal" fill="#a8d0ef" font-style="italic" letter-spacing="1.5" >Arafura Sea</text>
<text x="575" y="258" font-size="10" font-weight="normal" fill="#a8d0ef" font-style="italic" letter-spacing="1.5" >Timor Sea</text>
<text x="596" y="275" font-size="9.5" font-weight="bold" fill="#3d3d3d" font-style="normal" letter-spacing="0" stroke="#fff" stroke-width="2.2" stroke-opacity=".75" paint-order="stroke">Darwin</text>
<text x="753" y="211" font-size="9.5" font-weight="bold" fill="#3d3d3d" font-style="normal" letter-spacing="0" stroke="#fff" stroke-width="2.2" stroke-opacity=".75" paint-order="stroke">Papua</text>
<text x="742" y="223" font-size="9.5" font-weight="bold" fill="#3d3d3d" font-style="normal" letter-spacing="0" stroke="#fff" stroke-width="2.2" stroke-opacity=".75" paint-order="stroke">New Guinea</text>
<text x="723" y="246" font-size="9.5" font-weight="bold" fill="#3d3d3d" font-style="normal" letter-spacing="0" stroke="#fff" stroke-width="2.2" stroke-opacity=".75" paint-order="stroke">Port Moresby</text>
<circle cx="787.5" cy="242.5" r="1.6" fill="#fff" stroke="#444" stroke-width="0.9"/>
<text x="648" y="343" font-size="9" font-weight="normal" fill="#8d8d8d" font-style="normal" letter-spacing="0" stroke="#fff" stroke-width="2.2" stroke-opacity=".75" paint-order="stroke">N.T.</text>
<text x="754" y="376" font-size="9" font-weight="normal" fill="#8d8d8d" font-style="normal" letter-spacing="0" stroke="#fff" stroke-width="2.2" stroke-opacity=".75" paint-order="stroke">Qld.</text>
<text x="599" y="388" font-size="9.5" font-weight="bold" fill="#3d3d3d" font-style="normal" letter-spacing="0" stroke="#fff" stroke-width="2.2" stroke-opacity=".75" paint-order="stroke">Alice</text>
<text x="462" y="477" font-size="9.5" font-weight="bold" fill="#3d3d3d" font-style="normal" letter-spacing="0" stroke="#fff" stroke-width="2.2" stroke-opacity=".75" paint-order="stroke">Perth</text>
<text x="755" y="608" font-size="9.5" font-weight="bold" fill="#3d3d3d" font-style="normal" letter-spacing="0" stroke="#fff" stroke-width="2.2" stroke-opacity=".75" paint-order="stroke">Hobart</text>
</svg></div>

<div class="lc" style="left:420px;top:137px;width:22px;height:21.5px;background:#fff;border-radius:4px"></div>
<div class="lc" style="left:420px;top:167px;width:22px;height:45px;background:#fff;border-radius:4px">
<div class="abs" style="left:0;top:21.5px;width:22px;height:1px;background:#ddd"></div>
<svg class="abs" style="left:0;top:0" width="22" height="45"><path d="M11.4 6.5v9M6.9 11h9" stroke="#222" stroke-width="1.8"/><path d="M7 33h8.8" stroke="#222" stroke-width="1.8"/></svg>
</div>
<div class="lc" style="left:708px;top:145px;width:90px;height:33.5px;border-radius:5px">
<div class="abs" style="left:7.5px;top:13.5px;font-size:11.8px;color:#5a6a78">Color by:</div>
<div class="abs" style="left:56px;top:4.2px;width:40px;height:27px;border:2.5px solid #80b8ee;border-radius:4px;background:#fff"><div class="abs" style="left:7px;top:6.3px;font-size:12px;color:#555">taxon</div></div>
</div>
<div class="lc" style="left:420px;top:559px;width:119.5px;height:29.5px">
<div class="abs" style="left:4.5px;top:6px;font-size:11.8px;color:#5a6a78;white-space:pre">Size:  4</div>
<div class="abs" style="left:52.5px;top:10px;width:62.5px;height:8.5px;border-radius:5px;background:#d9e2ec"></div>
<div class="abs" style="left:67px;top:5.5px;width:17.2px;height:17.2px;border-radius:50%;background:radial-gradient(circle at 50% 40%,#4aa7e6,#2f8fd0)"></div>
</div>
<div class="lc" style="left:420px;top:597px;width:148.5px;height:29px">
<div class="abs" style="left:4.5px;top:6.3px;font-size:11.8px;color:#5a6a78;white-space:pre">Opacity:  0.8</div>
<div class="abs" style="left:81.5px;top:9.5px;width:62.5px;height:8.5px;border-radius:5px;background:#d9e2ec"></div>
<div class="abs" style="left:120.8px;top:5.3px;width:17.2px;height:17.2px;border-radius:50%;background:radial-gradient(circle at 50% 40%,#4aa7e6,#2f8fd0)"></div>
</div>
<div class="lc" style="left:420px;top:634.5px;width:62.5px;height:29px">
<div class="abs" style="left:4.5px;top:5.4px;font-size:11.8px;color:#5a6a78">Outline:</div>
<div class="abs" style="left:48.3px;top:9.5px;width:10px;height:10px;border-radius:2px;background:#3b8ff0"><svg class="abs" style="left:0;top:0" width="10" height="10"><path d="M2.5 5.2l1.8 2l3.4-4.5" stroke="#fff" stroke-width="1.2" fill="none"/></svg></div>
</div>
<div class="abs" style="left:573px;top:659.5px;width:230px;height:12px;background:rgba(255,255,255,.8);font-size:9.4px;line-height:12px;color:#333;padding-left:5.3px;white-space:nowrap"><span style="color:#0078a8">Leaflet</span> | Map data © <span style="color:#0078a8">OpenStreetMap</span> contributors, CC-BY-SA</div>
</body></html>
